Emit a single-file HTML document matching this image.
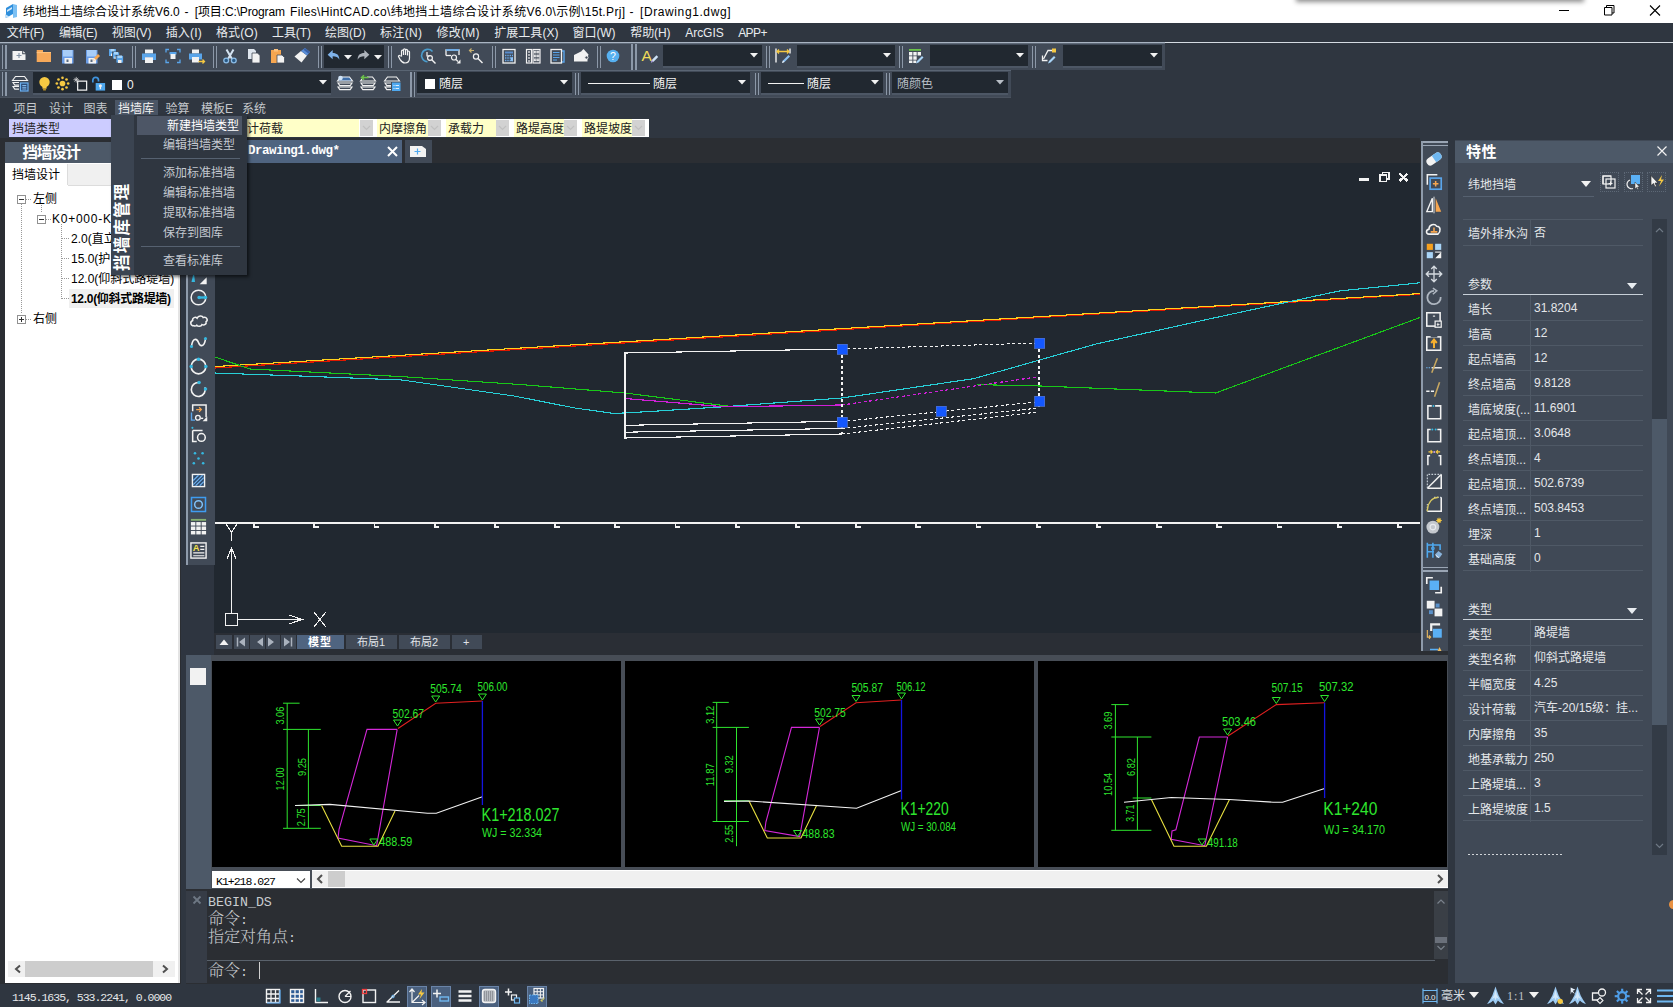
<!DOCTYPE html>
<html lang="zh-CN"><head><meta charset="utf-8"><title>纬地挡土墙综合设计系统V6.0</title>
<style>
html,body{margin:0;padding:0}
body{width:1673px;height:1007px;overflow:hidden;position:relative;background:#2b2e33;font-family:"Liberation Sans","Noto Sans CJK SC",sans-serif;font-size:12px;color:#e6e6e6}
.a{position:absolute;display:block}
.t{white-space:nowrap}
svg{overflow:visible}
</style></head>
<body>
<div class="a" style="left:0px;top:0px;width:1673px;height:23px;background:#ffffff;"></div>
<div class="a" style="left:1298px;top:-12px;width:284px;height:12px;background:#fff;box-shadow:0 0 5px 2px rgba(0,0,0,.45);"></div>
<svg class="a" style="left:4px;top:3px;" width="15" height="16" viewBox="0 0 15 16"><path d="M2 5l7-4v10l-7 4z" fill="#2f8fdc"/><path d="M9 1l4 1v12l-4 1z" fill="#7cc0f3"/><path d="M1 11l5 3-5 1z" fill="#bfe0fa"/><path d="M3 7l5-3v2l-5 3z" fill="#fff" opacity=".8"/></svg>
<div class="a t" style="left:23px;top:2.5px;height:18px;line-height:18px;font-size:12px;color:#000;letter-spacing:0.00px;">纬地挡土墙综合设计系统V6.0</div>
<div class="a t" style="left:184.5px;top:2.5px;height:18px;line-height:18px;font-size:12px;color:#000;">-</div>
<div class="a t" style="left:194.8px;top:2.5px;height:18px;line-height:18px;font-size:12px;color:#000;letter-spacing:-0.14px;">[项目:C:\Program</div>
<div class="a t" style="left:290px;top:2.5px;height:18px;line-height:18px;font-size:12px;color:#000;letter-spacing:0.35px;">Files\HintCAD.co\纬地挡土墙综合设计系统V6.0\示例\15t.Prj]</div>
<div class="a t" style="left:629.5px;top:2.5px;height:18px;line-height:18px;font-size:12px;color:#000;">-</div>
<div class="a t" style="left:640px;top:2.5px;height:18px;line-height:18px;font-size:12px;color:#000;letter-spacing:0.60px;">[Drawing1.dwg]</div>
<svg class="a" style="left:1550px;top:0px;" width="120" height="22" viewBox="0 0 120 22"><path d="M9 10.5h10" stroke="#000" stroke-width="1"/><path d="M54.5 7.5h7.5v7.5h-7.5zM56.5 7.5v-2h7.5v7.5h-2" stroke="#000" fill="none" stroke-width="1"/><path d="M100 5.5l10 10M110 5.5l-10 10" stroke="#000" stroke-width="1.1"/></svg>
<div class="a" style="left:0px;top:23px;width:1673px;height:115px;background:#2f3640;"></div>
<div class="a t" style="left:6.7px;top:23.5px;height:18px;line-height:18px;font-size:12px;color:#e9ecef;letter-spacing:-0.41px;">文件(F)</div>
<div class="a t" style="left:58.9px;top:23.5px;height:18px;line-height:18px;font-size:12px;color:#e9ecef;letter-spacing:-0.33px;">编辑(E)</div>
<div class="a t" style="left:111.8px;top:23.5px;height:18px;line-height:18px;font-size:12px;color:#e9ecef;letter-spacing:-0.07px;">视图(V)</div>
<div class="a t" style="left:165.7px;top:23.5px;height:18px;line-height:18px;font-size:12px;color:#e9ecef;letter-spacing:0.17px;">插入(I)</div>
<div class="a t" style="left:215.9px;top:23.5px;height:18px;line-height:18px;font-size:12px;color:#e9ecef;letter-spacing:0.12px;">格式(O)</div>
<div class="a t" style="left:272px;top:23.5px;height:18px;line-height:18px;font-size:12px;color:#e9ecef;letter-spacing:-0.08px;">工具(T)</div>
<div class="a t" style="left:324.9px;top:23.5px;height:18px;line-height:18px;font-size:12px;color:#e9ecef;letter-spacing:0.03px;">绘图(D)</div>
<div class="a t" style="left:380px;top:23.5px;height:18px;line-height:18px;font-size:12px;color:#e9ecef;letter-spacing:0.33px;">标注(N)</div>
<div class="a t" style="left:436.5px;top:23.5px;height:18px;line-height:18px;font-size:12px;color:#e9ecef;letter-spacing:0.25px;">修改(M)</div>
<div class="a t" style="left:494.2px;top:23.5px;height:18px;line-height:18px;font-size:12px;color:#e9ecef;letter-spacing:0.05px;">扩展工具(X)</div>
<div class="a t" style="left:572.6px;top:23.5px;height:18px;line-height:18px;font-size:12px;color:#e9ecef;letter-spacing:-0.08px;">窗口(W)</div>
<div class="a t" style="left:630.3px;top:23.5px;height:18px;line-height:18px;font-size:12px;color:#e9ecef;letter-spacing:-0.12px;">帮助(H)</div>
<div class="a t" style="left:685.2px;top:23.5px;height:18px;line-height:18px;font-size:12px;color:#e9ecef;letter-spacing:-0.03px;">ArcGIS</div>
<div class="a t" style="left:738.2px;top:23.5px;height:18px;line-height:18px;font-size:12px;color:#e9ecef;letter-spacing:-0.58px;">APP+</div>
<div class="a" style="left:0px;top:42px;width:1673px;height:1px;background:#a9b4c2;"></div>
<div class="a" style="left:0px;top:43px;width:1165px;height:1px;background:#5f6a78;"></div>
<div class="a" style="left:1165px;top:42px;width:508px;height:1px;background:#d5dbe2;"></div>
<div class="a" style="left:0px;top:44px;width:1165px;height:26px;background:#414a57;"></div>
<div class="a" style="left:0px;top:70px;width:1011px;height:1px;background:#5a6573;"></div>
<div class="a" style="left:1.5px;top:45px;width:1.5px;height:24px;background:#8c98a8;"></div><div class="a" style="left:5px;top:45px;width:2px;height:24px;background:#8c98a8;"></div>
<svg class="a" style="left:10px;top:47px;" width="18" height="18" viewBox="0 0 18 18"><path d="M2.500 4h9.700v3.300h3.300V13H2.500z" fill="#f2f2f2" /><path d="M13.200 4l2.300 2.300h-2.300z" fill="#f2f2f2" /><path d="M9 6v5M6.500 8.500h5" fill="none" stroke="#7f8fa2" stroke-width="1.1" /></svg>
<svg class="a" style="left:35px;top:47px;" width="18" height="18" viewBox="0 0 18 18"><path d="M1.700 3.100h6.300v2h8v9.800H1.700z" fill="#f6a95a" /><path d="M1.700 5.600h14.300" fill="none" stroke="#ffc480" stroke-width="1" /></svg>
<svg class="a" style="left:59px;top:47px;" width="18" height="18" viewBox="0 0 18 18"><rect x="3" y="3" width="11.5" height="13.5" fill="#6a9ce6" /><rect x="4" y="3" width="9.5" height="6.5" fill="#a8cdf8" /><rect x="5.5" y="11" width="7.5" height="5.5" fill="#f2f2f2" /><rect x="7.5" y="12.5" width="2" height="2.5" fill="#5a6a80" /></svg>
<svg class="a" style="left:83px;top:47px;" width="18" height="18" viewBox="0 0 18 18"><rect x="3" y="3" width="11.5" height="13.5" fill="#6a9ce6" /><rect x="4" y="3" width="9.5" height="6.5" fill="#a8cdf8" /><rect x="5.5" y="11" width="7.5" height="5.5" fill="#f2f2f2" /><rect x="7.5" y="12.5" width="2" height="2.5" fill="#5a6a80" /><path d="M10 14l1-3 4-4 2 2-4 4z" fill="#f6a650" /><path d="M10 14l1-3 2 2z" fill="#f2f2f2" /></svg>
<svg class="a" style="left:107px;top:47px;" width="18" height="18" viewBox="0 0 18 18"><rect x="2" y="2" width="7" height="7" fill="#5aa5ea" /><rect x="3.5" y="2" width="4" height="2.5" fill="#a9d4f7" /><rect x="4" y="6.5" width="3" height="2.5" fill="#f2f2f2" /><rect x="5.5" y="5" width="7" height="7" fill="#5aa5ea" stroke="#414a57" stroke-width="0.8" /><rect x="7" y="5" width="4" height="2.5" fill="#a9d4f7" /><rect x="7.5" y="9.5" width="3" height="2.5" fill="#f2f2f2" /><rect x="9" y="8.5" width="7.5" height="7.5" fill="#5aa5ea" stroke="#414a57" stroke-width="0.8" /><rect x="10.5" y="8.5" width="4.5" height="2.5" fill="#a9d4f7" /><rect x="11" y="13" width="3.5" height="3" fill="#f2f2f2" /></svg>
<svg class="a" style="left:140px;top:47px;" width="18" height="18" viewBox="0 0 18 18"><rect x="5" y="2.5" width="8" height="4" fill="#f2f2f2" /><path d="M2 6.5h14v6.5H2z" fill="#5aa5ea" /><rect x="5" y="10" width="8" height="6" fill="#f2f2f2" /><rect x="5" y="10" width="8" height="1" fill="#c8d4e4" /></svg>
<svg class="a" style="left:164px;top:47px;" width="18" height="18" viewBox="0 0 18 18"><path d="M2 5.5V2.5h3M13 2.5h3v3M16 12.5v3h-3M5 15.5H2v-3" fill="none" stroke="#5aa5ea" stroke-width="1.3" /><rect x="5.5" y="5" width="7" height="2.5" fill="#5aa5ea" /><rect x="6.5" y="7" width="5" height="5" fill="#f2f2f2" /></svg>
<svg class="a" style="left:188px;top:47px;" width="18" height="18" viewBox="0 0 18 18"><rect x="4" y="2.5" width="7" height="4" fill="#f2f2f2" /><path d="M1 6.5h13v6H1z" fill="#5aa5ea" /><rect x="4" y="10" width="7" height="5.5" fill="#f2f2f2" /><path d="M10.5 14.5h6M14.5 12.5l2 2-2 2" fill="none" stroke="#f5c842" stroke-width="1.3" /></svg>
<svg class="a" style="left:221px;top:47px;" width="18" height="18" viewBox="0 0 18 18"><path d="M5.500 2.500l5.500 9.500M12.500 2.500L7 12" fill="none" stroke="#d5e4f2" stroke-width="2" /><circle cx="5.2" cy="13.5" r="2.4" fill="#2a5a86" stroke="#8cbce6" stroke-width="1.3"/><circle cx="12.8" cy="13.5" r="2.4" fill="#2a5a86" stroke="#8cbce6" stroke-width="1.3"/></svg>
<svg class="a" style="left:245px;top:47px;" width="18" height="18" viewBox="0 0 18 18"><path d="M3 2h6l2 2v8H3z" fill="#dfe6ee" /><path d="M7 6h5.5L15 8.5V16H7z" fill="#f2f2f2" stroke="#414a57" stroke-width="0.8" /></svg>
<svg class="a" style="left:269px;top:47px;" width="18" height="18" viewBox="0 0 18 18"><path d="M2 3h10v13H2z" fill="#f6a650" /><rect x="5" y="2" width="4" height="2.5" fill="#fbc27f" /><path d="M8 8h5l2.5 2.5V16H8z" fill="#f2f2f2" stroke="#414a57" stroke-width="0.8" /></svg>
<svg class="a" style="left:293px;top:47px;" width="18" height="18" viewBox="0 0 18 18"><path d="M1.500 9.500L8 4l6 4.500L8.500 15.500z" fill="#f2f2f2" /><path d="M8 4l4-3 5 4-3 3.500z" fill="#5a8ed8" /><path d="M12 1l5 4-1.500 1.800-5-4z" fill="#3a62a8" /></svg>
<div class="a" style="left:132px;top:46px;width:1px;height:22px;background:#8c98a8;"></div><div class="a" style="left:135px;top:46px;width:1px;height:22px;background:#8c98a8;"></div>
<div class="a" style="left:213px;top:46px;width:1px;height:22px;background:#8c98a8;"></div><div class="a" style="left:216px;top:46px;width:1px;height:22px;background:#8c98a8;"></div>
<div class="a" style="left:318px;top:46px;width:1px;height:22px;background:#8c98a8;"></div><div class="a" style="left:321px;top:46px;width:1px;height:22px;background:#8c98a8;"></div>
<div class="a" style="left:388px;top:46px;width:1px;height:22px;background:#8c98a8;"></div><div class="a" style="left:391px;top:46px;width:1px;height:22px;background:#8c98a8;"></div>
<div class="a" style="left:492px;top:46px;width:1px;height:22px;background:#8c98a8;"></div><div class="a" style="left:495px;top:46px;width:1px;height:22px;background:#8c98a8;"></div>
<div class="a" style="left:597px;top:46px;width:1px;height:22px;background:#8c98a8;"></div><div class="a" style="left:600px;top:46px;width:1px;height:22px;background:#8c98a8;"></div>
<div class="a" style="left:324px;top:45px;width:60px;height:23px;background:#212830;"></div>
<svg class="a" style="left:326px;top:48px;" width="15" height="15" viewBox="0 0 18 18"><path d="M2 8l6-5.5v3.5c5 0 8 2.5 8 8-1.5-3-4-4-8-4v3.5z" fill="#7fb2ea" /></svg>
<svg class="a" style="left:356px;top:48px;" width="15" height="15" viewBox="0 0 18 18"><path d="M16 8l-6-5.5v3.5c-5 0-8 2.5-8 8 1.5-3 4-4 8-4v3.5z" fill="#aeb4bc" /></svg>
<svg class="a" style="left:344px;top:55px;" width="8" height="5" viewBox="0 0 8 5"><path d="M0 0h8l-4 4.500z" fill="#f2f2f2"/></svg>
<svg class="a" style="left:374px;top:55px;" width="8" height="5" viewBox="0 0 8 5"><path d="M0 0h8l-4 4.500z" fill="#f2f2f2"/></svg>
<svg class="a" style="left:396px;top:47px;" width="18" height="18" viewBox="0 0 18 18"><path d="M5.5 9V4.2a1 1 0 0 1 2 0V8V2.8a1 1 0 0 1 2 0V8V3.4a1 1 0 0 1 2 0V8.5V5a1 1 0 0 1 2 0V11c0 3-1.8 5-4.5 5s-3.6-1.3-5-3.6L2.6 9.8c-.6-1 .6-1.8 1.4-1z" fill="none" stroke="#f2f2f2" stroke-width="1.2" /></svg>
<svg class="a" style="left:419px;top:47px;" width="18" height="18" viewBox="0 0 18 18"><path d="M13.500 4.500A6.200 6.200 0 1 0 8.500 14.700" fill="none" stroke="#4a9ccc" stroke-width="1.6" /><path d="M8 5v4h2.5" fill="none" stroke="#f2f2f2" stroke-width="1.2" /><circle cx="11" cy="11" r="2.4" fill="none" stroke="#f2f2f2" stroke-width="1.2"/><path d="M12.8 12.8L16.5 16.5" fill="none" stroke="#f2f2f2" stroke-width="1.4" /></svg>
<svg class="a" style="left:444px;top:47px;" width="18" height="18" viewBox="0 0 18 18"><path d="M2 8.5V3h13v5" fill="none" stroke="#f2f2f2" stroke-width="1.3" /><rect x="2" y="2.2" width="13" height="1.5" fill="#5aa5ea" /><path d="M2 8.5h5" fill="none" stroke="#f2f2f2" stroke-width="1.3" /><circle cx="10" cy="10.5" r="2.5" fill="none" stroke="#f2f2f2" stroke-width="1.2"/><path d="M12 12.5L14 14.5" fill="none" stroke="#f2f2f2" stroke-width="1.3" /><path d="M16.5 12.5v4h-4z" fill="#f2f2f2" /></svg>
<svg class="a" style="left:467px;top:47px;" width="18" height="18" viewBox="0 0 18 18"><path d="M7 3.5H2.5M4.5 1.5l-2 2 2 2" fill="none" stroke="#c8b070" stroke-width="1.2" /><circle cx="9" cy="9.5" r="2.6" fill="none" stroke="#f2f2f2" stroke-width="1.2"/><path d="M11 11.5L15.5 16" fill="none" stroke="#f2f2f2" stroke-width="1.4" /></svg>
<svg class="a" style="left:500px;top:47px;" width="18" height="18" viewBox="0 0 18 18"><rect x="3" y="2.5" width="12" height="13.5" fill="none" stroke="#f2f2f2" stroke-width="1.3" /><rect x="5" y="4.5" width="8" height="2" fill="#5a8ccc" /><path d="M5 8.500h8M5 11h8M5 13.500h8" fill="none" stroke="#6aa8e8" stroke-width="1.3" stroke-dasharray="1.400 0.900"/><rect x="10.8" y="10.3" width="2.2" height="3.9" fill="#8cc0f2" /></svg>
<svg class="a" style="left:524px;top:47px;" width="18" height="18" viewBox="0 0 18 18"><rect x="2.5" y="2.5" width="5" height="13.5" fill="none" stroke="#f2f2f2" stroke-width="1.2" /><rect x="9" y="2.5" width="7" height="13.5" fill="none" stroke="#f2f2f2" stroke-width="1.2" /><path d="M4.200 5h1.600M4.200 8h1.600M4.200 11h1.600M4.200 14h1.600" fill="none" stroke="#f2f2f2" stroke-width="1.5" /><rect x="10.3" y="4.2" width="1.7" height="1.7" fill="none" stroke="#f2f2f2" stroke-width="0.9" /><rect x="10.3" y="8.1" width="1.7" height="1.7" fill="none" stroke="#f2f2f2" stroke-width="0.9" /><rect x="10.3" y="12.0" width="1.7" height="1.7" fill="none" stroke="#f2f2f2" stroke-width="0.9" /><rect x="13.200000000000001" y="4.2" width="1.7" height="1.7" fill="none" stroke="#f2f2f2" stroke-width="0.9" /><rect x="13.200000000000001" y="8.1" width="1.7" height="1.7" fill="none" stroke="#f2f2f2" stroke-width="0.9" /><rect x="13.200000000000001" y="12.0" width="1.7" height="1.7" fill="none" stroke="#f2f2f2" stroke-width="0.9" /></svg>
<svg class="a" style="left:548px;top:47px;" width="18" height="18" viewBox="0 0 18 18"><path d="M14 4h2v11h-3" fill="none" stroke="#5aa5ea" stroke-width="1.4" /><rect x="3" y="2.5" width="10.5" height="13.5" fill="none" stroke="#f2f2f2" stroke-width="1.3" /><path d="M5 5.5h6.5M5 8h6.5M5 10.5h6.5M5 13h4" fill="none" stroke="#5aa5ea" stroke-width="1.2" /></svg>
<svg class="a" style="left:572px;top:47px;" width="18" height="18" viewBox="0 0 18 18"><path d="M2 8l7-3.5 3 1.5 3.5 4.5v4H2z" fill="#f2f2f2" /><path d="M9 4.5l2.5-2.5 5 5.5-1 3" fill="#f2f2f2" /><circle cx="14.5" cy="10.5" r="1.6" fill="#414a57" stroke="#f2f2f2" stroke-width="0.9"/></svg>
<svg class="a" style="left:604px;top:47px;" width="18" height="18" viewBox="0 0 18 18"><circle cx="9" cy="9" r="6.3" fill="#56b0f0"/><text x="9" y="12.700" font-size="10.500" fill="#fff" text-anchor="middle" font-family="Liberation Sans,sans-serif">?</text></svg>
<div class="a" style="left:631px;top:44px;width:2px;height:26px;background:#8c98a8;"></div>
<div class="a" style="left:635px;top:44px;width:2px;height:26px;background:#8c98a8;"></div>
<svg class="a" style="left:640px;top:47px;" width="18" height="18" viewBox="0 0 18 18"><text x="1.500" y="14" font-size="15.500" fill="#f0dc5a" font-family="Liberation Sans,sans-serif">A</text><path d="M11 15.500l.8-2.500 4.700-4.700 1.700 1.700-4.700 4.700z" fill="#cfe3f7" /><path d="M11 15.500l.8-2.500 1.700 1.700z" fill="#9a86c8" /></svg>
<div class="a" style="left:663px;top:45px;width:99px;height:21px;background:#212830;"></div><div class="a" style="left:663px;top:66px;width:99px;height:2px;background:#4d5765;"></div><svg class="a" style="left:749.5px;top:53px;" width="8" height="5" viewBox="0 0 8 5"><path d="M0 0h8l-4 4.500z" fill="#f2f2f2"/></svg>
<div class="a" style="left:766px;top:46px;width:1px;height:22px;background:#8c98a8;"></div><div class="a" style="left:769px;top:46px;width:1px;height:22px;background:#8c98a8;"></div>
<svg class="a" style="left:774px;top:47px;" width="18" height="18" viewBox="0 0 18 18"><path d="M2 1.5v14M16 1.5v5" fill="none" stroke="#f2f2f2" stroke-width="1.4" /><path d="M3 4.5h12M5 2.5l-2 2 2 2M13 2.5l2 2-2 2" fill="none" stroke="#f5c842" stroke-width="1.3" /><path d="M8 16l1-2.5 5.5-5.5 1.5 1.5-5.5 5.5z" fill="#8cc0f2" /><path d="M8 16l1-2.5 1.5 1.5z" fill="#f2f2f2" /></svg>
<div class="a" style="left:797px;top:45px;width:98px;height:21px;background:#212830;"></div><div class="a" style="left:797px;top:66px;width:98px;height:2px;background:#4d5765;"></div><svg class="a" style="left:882.5px;top:53px;" width="8" height="5" viewBox="0 0 8 5"><path d="M0 0h8l-4 4.500z" fill="#f2f2f2"/></svg>
<div class="a" style="left:899px;top:46px;width:1px;height:22px;background:#8c98a8;"></div><div class="a" style="left:902px;top:46px;width:1px;height:22px;background:#8c98a8;"></div>
<svg class="a" style="left:907px;top:47px;" width="18" height="18" viewBox="0 0 18 18"><rect x="2" y="2" width="12" height="1.8" fill="#6cc24a" /><path d="M2 5h3.4v3.4H2zM6.3 5h3.4v3.4H6.3zM10.6 5h3.4v3.4h-3.4zM2 9.3h3.4v3.4H2zM6.3 9.3h3.4v3.4H6.3zM2 13.6h3.4V16H2zM6.3 13.6h3v2.4h-3z" fill="#f2f2f2" /><path d="M9 16.5l1-2.5 5-5 1.5 1.5-5 5z" fill="#a9d4f7" /></svg>
<div class="a" style="left:930px;top:45px;width:98px;height:21px;background:#212830;"></div><div class="a" style="left:930px;top:66px;width:98px;height:2px;background:#4d5765;"></div><svg class="a" style="left:1015.5px;top:53px;" width="8" height="5" viewBox="0 0 8 5"><path d="M0 0h8l-4 4.500z" fill="#f2f2f2"/></svg>
<div class="a" style="left:1032px;top:46px;width:1px;height:22px;background:#8c98a8;"></div><div class="a" style="left:1035px;top:46px;width:1px;height:22px;background:#8c98a8;"></div>
<svg class="a" style="left:1040px;top:47px;" width="18" height="18" viewBox="0 0 18 18"><rect x="12" y="1.5" width="4" height="4" fill="#f5c842" /><path d="M12 3.5H8L3.5 12" fill="none" stroke="#f2f2f2" stroke-width="1.3" /><path d="M2.5 8.5v5h5" fill="none" stroke="#f2f2f2" stroke-width="1.3" /><path d="M8 16.5l1-2.5 5-5 1.5 1.5-5 5z" fill="#a9d4f7" /></svg>
<div class="a" style="left:1063px;top:45px;width:99px;height:21px;background:#212830;"></div><div class="a" style="left:1063px;top:66px;width:99px;height:2px;background:#4d5765;"></div><svg class="a" style="left:1149.5px;top:53px;" width="8" height="5" viewBox="0 0 8 5"><path d="M0 0h8l-4 4.500z" fill="#f2f2f2"/></svg>
<div class="a" style="left:0px;top:71px;width:1011px;height:26px;background:#414a57;"></div>
<div class="a" style="left:0px;top:97px;width:1011px;height:1px;background:#4a525e;"></div>
<div class="a" style="left:1.5px;top:72px;width:1.5px;height:24px;background:#8c98a8;"></div><div class="a" style="left:5px;top:72px;width:2px;height:24px;background:#8c98a8;"></div>
<svg class="a" style="left:11px;top:74px;" width="18" height="18" viewBox="0 0 18 18"><path d="M4.5 2.5h9l3 4H1.5z" fill="none" stroke="#f2f2f2" stroke-width="1.1" /><path d="M8 8.500H2l1.800 2.600H8M8 12.500H2l1.800 2.600H8" fill="none" stroke="#f2f2f2" stroke-width="1.1" /><rect x="9.5" y="9" width="7.5" height="8" fill="#2f4e78" stroke="#6ab0f0" stroke-width="1.2" /><path d="M11.300 11.500h4M11.300 13.300h4M11.300 15h4" fill="none" stroke="#8cc4f6" stroke-width="0.9" /></svg>
<div class="a" style="left:33px;top:72px;width:298px;height:21px;background:#212830;"></div><div class="a" style="left:33px;top:93px;width:298px;height:2px;background:#4d5765;"></div><svg class="a" style="left:318.5px;top:80px;" width="8" height="5" viewBox="0 0 8 5"><path d="M0 0h8l-4 4.500z" fill="#f2f2f2"/></svg>
<svg class="a" style="left:36px;top:75px;" width="17" height="17" viewBox="0 0 18 18"><circle cx="9" cy="7.5" r="5.5" fill="#f5c842"/><rect x="6.8" y="12.5" width="4.4" height="2" fill="#f5c842" /><rect x="7.5" y="15" width="3" height="1.3" fill="#d9a520" /></svg>
<svg class="a" style="left:54px;top:75px;" width="17" height="17" viewBox="0 0 18 18"><circle cx="9" cy="9" r="3" fill="#f5c842"/><circle cx="15.0" cy="9.0" r="1.4" fill="#f5c842"/><circle cx="13.24" cy="13.24" r="1.4" fill="#f5c842"/><circle cx="9.0" cy="15.0" r="1.4" fill="#f5c842"/><circle cx="4.76" cy="13.24" r="1.4" fill="#f5c842"/><circle cx="3.0" cy="9.0" r="1.4" fill="#f5c842"/><circle cx="4.76" cy="4.76" r="1.4" fill="#f5c842"/><circle cx="9.0" cy="3.0" r="1.4" fill="#f5c842"/><circle cx="13.24" cy="4.76" r="1.4" fill="#f5c842"/></svg>
<svg class="a" style="left:72px;top:75px;" width="17" height="17" viewBox="0 0 18 18"><rect x="6" y="6.5" width="9.5" height="9.5" fill="none" stroke="#f2f2f2" stroke-width="1.3" /><path d="M4.500 2v6M1.500 5h6M2.500 3l4 4M6.500 3l-4 4" fill="none" stroke="#d8d8d8" stroke-width="0.8" /></svg>
<svg class="a" style="left:90px;top:75px;" width="17" height="17" viewBox="0 0 18 18"><path d="M3 8V5.5a3 3 0 0 1 6 0V7" fill="none" stroke="#3f93dd" stroke-width="1.8" /><rect x="6" y="8.5" width="10" height="8" fill="#4fa8ee" /><circle cx="11" cy="11.5" r="1.6" fill="#f2f2f2"/><rect x="10.3" y="12" width="1.4" height="3" fill="#f2f2f2" /></svg>
<div class="a" style="left:112px;top:80px;width:10px;height:10px;background:#ffffff;"></div>
<div class="a t" style="left:127px;top:76.5px;height:16px;line-height:16px;font-size:12px;color:#f2f2f2;">0</div>
<svg class="a" style="left:336px;top:74px;" width="18" height="18" viewBox="0 0 18 18"><path d="M4.5 3h9l3 4H1.5z" fill="#3f6ea8" stroke="#f2f2f2" stroke-width="1.1" /><circle cx="4.5" cy="4" r="2.3" fill="#cfe3f7"/><path d="M2 9h14l-1.8 2.6H3.8z" fill="none" stroke="#f2f2f2" stroke-width="1.1" /><path d="M2 13h14l-1.8 2.6H3.8z" fill="none" stroke="#f2f2f2" stroke-width="1.1" /></svg>
<svg class="a" style="left:359px;top:74px;" width="18" height="18" viewBox="0 0 18 18"><path d="M8 3h5.5l3 4H1.5l1.5-2" fill="none" stroke="#f2f2f2" stroke-width="1.1" /><path d="M9.5 3.5H2.5M5 1.2L2.5 3.5 5 5.8" fill="none" stroke="#6cc24a" stroke-width="1.5" /><path d="M2 9h14l-1.8 2.6H3.8z" fill="none" stroke="#f2f2f2" stroke-width="1.1" /><path d="M2 13h14l-1.8 2.6H3.8z" fill="none" stroke="#f2f2f2" stroke-width="1.1" /></svg>
<svg class="a" style="left:383px;top:74px;" width="18" height="18" viewBox="0 0 18 18"><path d="M4.5 3h9l3 4H1.5z" fill="none" stroke="#f2f2f2" stroke-width="1.1" /><path d="M8 9H2l1.800 2.600H8M8 13H2l1.800 2.600H8" fill="none" stroke="#f2f2f2" stroke-width="1.1" /><rect x="9" y="8.5" width="8.5" height="8.5" fill="#4fa8ee" /><path d="M10.500 11.500h1M12.500 11.500h3.500M10.500 14.500h1M12.500 14.500h3.500" fill="none" stroke="#dceefc" stroke-width="1.2" /></svg>
<div class="a" style="left:410px;top:72px;width:2px;height:25px;background:#8c98a8;"></div>
<div class="a" style="left:414px;top:72px;width:1px;height:25px;background:#8c98a8;"></div>
<div class="a" style="left:417px;top:72px;width:155px;height:21px;background:#212830;"></div><div class="a" style="left:417px;top:93px;width:155px;height:2px;background:#4d5765;"></div><svg class="a" style="left:559.5px;top:80px;" width="8" height="5" viewBox="0 0 8 5"><path d="M0 0h8l-4 4.500z" fill="#f2f2f2"/></svg>
<div class="a" style="left:425px;top:79px;width:10px;height:10px;background:#fff;"></div>
<div class="a t" style="left:439px;top:75.5px;height:16px;line-height:16px;font-size:12px;color:#f2f2f2;">随层</div>
<div class="a" style="left:575px;top:73px;width:1px;height:22px;background:#8c98a8;"></div><div class="a" style="left:578px;top:73px;width:1px;height:22px;background:#8c98a8;"></div>
<div class="a" style="left:581px;top:72px;width:169px;height:21px;background:#212830;"></div><div class="a" style="left:581px;top:93px;width:169px;height:2px;background:#4d5765;"></div><svg class="a" style="left:737.5px;top:80px;" width="8" height="5" viewBox="0 0 8 5"><path d="M0 0h8l-4 4.500z" fill="#f2f2f2"/></svg>
<div class="a" style="left:588px;top:83px;width:62px;height:1px;background:#f2f2f2;"></div>
<div class="a t" style="left:653px;top:75.5px;height:16px;line-height:16px;font-size:12px;color:#f2f2f2;">随层</div>
<div class="a" style="left:755px;top:73px;width:1px;height:22px;background:#8c98a8;"></div><div class="a" style="left:758px;top:73px;width:1px;height:22px;background:#8c98a8;"></div>
<div class="a" style="left:761px;top:72px;width:122px;height:21px;background:#212830;"></div><div class="a" style="left:761px;top:93px;width:122px;height:2px;background:#4d5765;"></div><svg class="a" style="left:870.5px;top:80px;" width="8" height="5" viewBox="0 0 8 5"><path d="M0 0h8l-4 4.500z" fill="#f2f2f2"/></svg>
<div class="a" style="left:768px;top:83px;width:36px;height:1px;background:#f2f2f2;"></div>
<div class="a t" style="left:807px;top:75.5px;height:16px;line-height:16px;font-size:12px;color:#f2f2f2;">随层</div>
<div class="a" style="left:886px;top:73px;width:1px;height:22px;background:#8c98a8;"></div><div class="a" style="left:889px;top:73px;width:1px;height:22px;background:#8c98a8;"></div>
<div class="a" style="left:892px;top:72px;width:116px;height:21px;background:#212830;"></div><div class="a" style="left:892px;top:93px;width:116px;height:2px;background:#4d5765;"></div><svg class="a" style="left:995.5px;top:80px;" width="8" height="5" viewBox="0 0 8 5"><path d="M0 0h8l-4 4.500z" fill="#b8bec6"/></svg>
<div class="a t" style="left:897px;top:75.5px;height:16px;line-height:16px;font-size:12px;color:#b8bec6;">随颜色</div>
<div class="a" style="left:115px;top:100px;width:43px;height:16px;background:#4a5565;"></div>
<div class="a t" style="left:13.5px;top:100.5px;height:16px;line-height:16px;font-size:12px;color:#c4c8cc;white-space:nowrap;">项目</div>
<div class="a t" style="left:49px;top:100.5px;height:16px;line-height:16px;font-size:12px;color:#c4c8cc;white-space:nowrap;">设计</div>
<div class="a t" style="left:83.5px;top:100.5px;height:16px;line-height:16px;font-size:12px;color:#c4c8cc;white-space:nowrap;">图表</div>
<div class="a t" style="left:118px;top:100.5px;height:16px;line-height:16px;font-size:12px;color:#f2f2f2;white-space:nowrap;">挡墙库</div>
<div class="a t" style="left:165.5px;top:100.5px;height:16px;line-height:16px;font-size:12px;color:#c4c8cc;white-space:nowrap;">验算</div>
<div class="a t" style="left:201px;top:100.5px;height:16px;line-height:16px;font-size:12px;color:#c4c8cc;white-space:nowrap;">模板E</div>
<div class="a t" style="left:242px;top:100.5px;height:16px;line-height:16px;font-size:12px;color:#c4c8cc;white-space:nowrap;">系统</div>
<div class="a" style="left:9px;top:119px;width:102px;height:18px;background:#ccccff;"></div>
<div class="a t" style="left:12px;top:120.5px;height:16px;line-height:16px;font-size:12px;color:#222;">挡墙类型</div>
<div class="a" style="left:245px;top:119px;width:404px;height:18px;background:#ffffff;"></div>
<div class="a" style="left:245px;top:119px;width:114px;height:18px;background:#ffffc8;"></div><div class="a t" style="left:247px;top:120.5px;height:16px;line-height:16px;font-size:12px;color:#222;white-space:nowrap;">计荷载</div><div class="a" style="left:360px;top:120px;width:13px;height:16px;background:#d2d2d2;"></div><svg class="a" style="left:362px;top:125px;" width="9" height="6" viewBox="0 0 9 6"><path d="M1 1l3.5 3.5L8 1" stroke="#c0c0c0" fill="none" stroke-width="1.2"/></svg>
<div class="a" style="left:377px;top:119px;width:51px;height:18px;background:#ffffc8;"></div><div class="a t" style="left:379px;top:120.5px;height:16px;line-height:16px;font-size:12px;color:#222;white-space:nowrap;">内摩擦角</div><div class="a" style="left:428px;top:120px;width:13px;height:16px;background:#d2d2d2;"></div><svg class="a" style="left:430px;top:125px;" width="9" height="6" viewBox="0 0 9 6"><path d="M1 1l3.5 3.5L8 1" stroke="#c0c0c0" fill="none" stroke-width="1.2"/></svg>
<div class="a" style="left:446px;top:119px;width:50px;height:18px;background:#ffffc8;"></div><div class="a t" style="left:448px;top:120.5px;height:16px;line-height:16px;font-size:12px;color:#222;white-space:nowrap;">承载力</div><div class="a" style="left:496px;top:120px;width:13px;height:16px;background:#d2d2d2;"></div><svg class="a" style="left:498px;top:125px;" width="9" height="6" viewBox="0 0 9 6"><path d="M1 1l3.5 3.5L8 1" stroke="#c0c0c0" fill="none" stroke-width="1.2"/></svg>
<div class="a" style="left:514px;top:119px;width:50px;height:18px;background:#ffffc8;"></div><div class="a t" style="left:516px;top:120.5px;height:16px;line-height:16px;font-size:12px;color:#222;white-space:nowrap;">路堤高度</div><div class="a" style="left:564px;top:120px;width:13px;height:16px;background:#d2d2d2;"></div><svg class="a" style="left:566px;top:125px;" width="9" height="6" viewBox="0 0 9 6"><path d="M1 1l3.5 3.5L8 1" stroke="#c0c0c0" fill="none" stroke-width="1.2"/></svg>
<div class="a" style="left:582px;top:119px;width:50px;height:18px;background:#ffffc8;"></div><div class="a t" style="left:584px;top:120.5px;height:16px;line-height:16px;font-size:12px;color:#222;white-space:nowrap;">路堤坡度</div><div class="a" style="left:632px;top:120px;width:13px;height:16px;background:#d2d2d2;"></div><svg class="a" style="left:634px;top:125px;" width="9" height="6" viewBox="0 0 9 6"><path d="M1 1l3.5 3.5L8 1" stroke="#c0c0c0" fill="none" stroke-width="1.2"/></svg>
<div class="a" style="left:5px;top:142px;width:175px;height:21px;background:#4d5968;"></div>
<div class="a t" style="left:22.5px;top:141.5px;height:22px;line-height:22px;font-size:15.5px;color:#ffffff;font-weight:bold;letter-spacing:-1.17px;">挡墙设计</div>
<div class="a" style="left:5px;top:163px;width:175px;height:23px;background:#f0f0f0;"></div>
<div class="a" style="left:5px;top:163px;width:63px;height:23px;background:#ffffff;"></div>
<div class="a" style="left:68px;top:163px;width:112px;height:1px;background:#ffffff;"></div>
<div class="a" style="left:68px;top:185px;width:112px;height:1px;background:#dcdcdc;"></div>
<div class="a" style="left:67px;top:164px;width:1px;height:21px;background:#dcdcdc;"></div>
<div class="a t" style="left:12px;top:167.0px;height:16px;line-height:16px;font-size:12px;color:#000;">挡墙设计</div>
<div class="a" style="left:5px;top:186px;width:173px;height:797px;background:#ffffff;"></div>
<div class="a" style="left:178px;top:163px;width:2px;height:820px;background:#e4e4e4;"></div>
<div class="a" style="left:21px;top:204px;width:1px;height:110px;background-image:linear-gradient(#999 50%,transparent 50%);background-size:1px 2px;"></div>
<div class="a" style="left:41px;top:205px;width:1px;height:8px;background-image:linear-gradient(#999 50%,transparent 50%);background-size:1px 2px;"></div>
<div class="a" style="left:61px;top:224px;width:1px;height:75px;background-image:linear-gradient(#999 50%,transparent 50%);background-size:1px 2px;"></div>
<div class="a" style="left:62px;top:238px;width:8px;height:1px;background-image:linear-gradient(90deg,#999 50%,transparent 50%);background-size:2px 1px;"></div>
<div class="a" style="left:62px;top:258px;width:8px;height:1px;background-image:linear-gradient(90deg,#999 50%,transparent 50%);background-size:2px 1px;"></div>
<div class="a" style="left:62px;top:278px;width:8px;height:1px;background-image:linear-gradient(90deg,#999 50%,transparent 50%);background-size:2px 1px;"></div>
<div class="a" style="left:62px;top:298px;width:8px;height:1px;background-image:linear-gradient(90deg,#999 50%,transparent 50%);background-size:2px 1px;"></div>
<div class="a" style="left:26px;top:199px;width:5px;height:1px;background-image:linear-gradient(90deg,#999 50%,transparent 50%);background-size:2px 1px;"></div>
<div class="a" style="left:46px;top:219px;width:5px;height:1px;background-image:linear-gradient(90deg,#999 50%,transparent 50%);background-size:2px 1px;"></div>
<div class="a" style="left:26px;top:319px;width:5px;height:1px;background-image:linear-gradient(90deg,#999 50%,transparent 50%);background-size:2px 1px;"></div>
<div class="a" style="left:17px;top:195px;width:9px;height:9px;background:#fff;box-sizing:border-box;border:1px solid #919191;"></div><div class="a" style="left:19px;top:199px;width:5px;height:1px;background:#333;"></div>
<div class="a" style="left:37px;top:215px;width:9px;height:9px;background:#fff;box-sizing:border-box;border:1px solid #919191;"></div><div class="a" style="left:39px;top:219px;width:5px;height:1px;background:#333;"></div>
<div class="a" style="left:17px;top:315px;width:9px;height:9px;background:#fff;box-sizing:border-box;border:1px solid #919191;"></div><div class="a" style="left:19px;top:319px;width:5px;height:1px;background:#333;"></div><div class="a" style="left:21px;top:317px;width:1px;height:5px;background:#333;"></div>
<div class="a t" style="left:33px;top:191.0px;height:16px;line-height:16px;font-size:12px;color:#000;">左侧</div>
<div class="a t" style="left:52px;top:211.0px;height:16px;line-height:16px;font-size:12px;color:#000;white-space:nowrap;letter-spacing:0.75px;">K0+000-K</div>
<div class="a t" style="left:71px;top:230.5px;height:16px;line-height:16px;font-size:12px;color:#000;white-space:nowrap;">2.0(直立</div>
<div class="a t" style="left:71px;top:250.5px;height:16px;line-height:16px;font-size:12px;color:#000;white-space:nowrap;">15.0(护</div>
<div class="a t" style="left:71px;top:270.5px;height:16px;line-height:16px;font-size:12px;color:#000;white-space:nowrap;width:103px;overflow:hidden;">12.0(仰斜式路堤墙)</div>
<div class="a" style="left:69px;top:289px;width:105px;height:19px;background:#f0f0f0;"></div>
<div class="a t" style="left:71px;top:290.5px;height:16px;line-height:16px;font-size:12px;color:#000;white-space:nowrap;font-weight:bold;width:103px;overflow:hidden;letter-spacing:-.3px;">12.0(仰斜式路堤墙)</div>
<div class="a t" style="left:33px;top:311.0px;height:16px;line-height:16px;font-size:12px;color:#000;">右侧</div>
<div class="a" style="left:8px;top:961px;width:167px;height:16px;background:#f0f0f0;"></div>
<div class="a" style="left:25px;top:961px;width:128px;height:16px;background:#cdcdcd;"></div>
<svg class="a" style="left:8px;top:961px;" width="168" height="16" viewBox="0 0 168 16"><path d="M12 4.5l-4 3.5 4 3.5M155 4.5l4 3.5-4 3.5" stroke="#505050" fill="none" stroke-width="2"/></svg>
<div class="a" style="left:181px;top:140px;width:5px;height:845px;background:#2f3640;"></div>
<div class="a" style="left:181px;top:140px;width:34px;height:515px;background:#2e3540;"></div>
<div class="a" style="left:214px;top:140px;width:188px;height:23px;background:#4f6480;"></div>
<div class="a t" style="left:248px;top:143.0px;height:16px;line-height:16px;font-size:12.5px;color:#fff;font-family:'Liberation Mono',monospace;font-weight:bold;letter-spacing:-0.46px;">Drawing1.dwg*</div>
<svg class="a" style="left:386px;top:145px;" width="13" height="13" viewBox="0 0 13 13"><path d="M2 2l9 9M11 2l-9 9" stroke="#fff" stroke-width="2"/></svg>
<div class="a" style="left:405px;top:140px;width:27px;height:23px;background:#414a57;"></div>
<svg class="a" style="left:409px;top:145px;" width="18" height="13" viewBox="0 0 18 13"><path d="M1 1h12l4 3v8H1z" fill="#f2f2f2"/><path d="M8.5 3.5v6M5.5 6.5h6" stroke="#4fa8ee" stroke-width="1.2"/></svg>
<div class="a" style="left:214px;top:163px;width:1206px;height:470px;background:#212830;"></div>
<svg class="a" style="left:0;top:0" width="1673" height="1007" viewBox="0 0 1673 1007"><defs><clipPath id="dc"><rect x="214" y="163" width="1206" height="470"/></clipPath></defs><g clip-path="url(#dc)" shape-rendering="crispEdges"><polyline points="214,368 1420,294.3" fill="none" stroke="#e01800" stroke-width="1.2" /><polyline points="214,366.6 1420,293.6" fill="none" stroke="#ffd21e" stroke-width="1.1" /><polyline points="215,357 250,369 400,376.5 520,384.5 625,393 735,407" fill="none" stroke="#18c818" stroke-width="1.1" /><polyline points="977,384.6 1040,386 1215.6,393 1420,317.5" fill="none" stroke="#18c818" stroke-width="1.1" /><polyline points="214,373 300,376 402,380 514,396 575,408 614,413.5 650,411.5 720,407 842,398 974,378.6 1096,344 1216,317.5 1339,291 1420,282.8" fill="none" stroke="#28d0d8" stroke-width="1.1" /><polyline points="625,398.5 724,406.8 842,405" fill="none" stroke="#d020d8" stroke-width="1.2" /><polyline points="842,405 1037,377" fill="none" stroke="#d020d8" stroke-width="1.2" stroke-dasharray="3 2.5"/><polyline points="842,349 625,353 625,438 842,434" fill="none" stroke="#f2f2f2" stroke-width="1.1" /><polyline points="625,425.3 842,421.3" fill="none" stroke="#f2f2f2" stroke-width="1.1" /><polyline points="625,432.2 842,428.4" fill="none" stroke="#f2f2f2" stroke-width="1.1" /><polyline points="842,349 1039,343 1039,408" fill="none" stroke="#f2f2f2" stroke-width="1.1" stroke-dasharray="3 2.5"/><polyline points="842,349 842,434" fill="none" stroke="#f2f2f2" stroke-width="1.1" stroke-dasharray="3 2.5"/><polyline points="842,421.5 1039,401.7" fill="none" stroke="#f2f2f2" stroke-width="1.1" stroke-dasharray="3 2.5"/><polyline points="842,428.5 1039,408" fill="none" stroke="#f2f2f2" stroke-width="1.1" stroke-dasharray="3 2.5"/><polyline points="842,434 1039,412" fill="none" stroke="#f2f2f2" stroke-width="1.1" stroke-dasharray="3 2.5"/><rect x="837" y="344" width="10" height="10" fill="#1458ff" stroke="#4a6fd0" stroke-width="0.8"/><rect x="1034.5" y="338" width="10" height="10" fill="#1458ff" stroke="#4a6fd0" stroke-width="0.8"/><rect x="837" y="417" width="10" height="10" fill="#1458ff" stroke="#4a6fd0" stroke-width="0.8"/><rect x="936" y="406" width="10" height="10" fill="#1458ff" stroke="#4a6fd0" stroke-width="0.8"/><rect x="1034.5" y="396" width="10" height="10" fill="#1458ff" stroke="#4a6fd0" stroke-width="0.8"/><polyline points="214,523 1420,523" fill="none" stroke="#f2f2f2" stroke-width="1.2" /><path d="M254.0 523v4h4.500" stroke="#f2f2f2" fill="none" stroke-width="1.800"/><path d="M314.2 523v4h4.500" stroke="#f2f2f2" fill="none" stroke-width="1.800"/><path d="M374.4 523v4h4.500" stroke="#f2f2f2" fill="none" stroke-width="1.800"/><path d="M434.6 523v4h4.500" stroke="#f2f2f2" fill="none" stroke-width="1.800"/><path d="M494.8 523v4h4.500" stroke="#f2f2f2" fill="none" stroke-width="1.800"/><path d="M555.0 523v4h4.500" stroke="#f2f2f2" fill="none" stroke-width="1.800"/><path d="M615.2 523v4h4.500" stroke="#f2f2f2" fill="none" stroke-width="1.800"/><path d="M675.4 523v4h4.500" stroke="#f2f2f2" fill="none" stroke-width="1.800"/><path d="M735.6 523v4h4.500" stroke="#f2f2f2" fill="none" stroke-width="1.800"/><path d="M795.8 523v4h4.500" stroke="#f2f2f2" fill="none" stroke-width="1.800"/><path d="M856.0 523v4h4.500" stroke="#f2f2f2" fill="none" stroke-width="1.800"/><path d="M916.2 523v4h4.500" stroke="#f2f2f2" fill="none" stroke-width="1.800"/><path d="M976.4 523v4h4.500" stroke="#f2f2f2" fill="none" stroke-width="1.800"/><path d="M1036.6 523v4h4.500" stroke="#f2f2f2" fill="none" stroke-width="1.800"/><path d="M1096.8 523v4h4.500" stroke="#f2f2f2" fill="none" stroke-width="1.800"/><path d="M1157.0 523v4h4.500" stroke="#f2f2f2" fill="none" stroke-width="1.800"/><path d="M1217.2 523v4h4.500" stroke="#f2f2f2" fill="none" stroke-width="1.800"/><path d="M1277.4 523v4h4.500" stroke="#f2f2f2" fill="none" stroke-width="1.800"/><path d="M1337.6 523v4h4.500" stroke="#f2f2f2" fill="none" stroke-width="1.800"/><path d="M1397.8 523v4h4.500" stroke="#f2f2f2" fill="none" stroke-width="1.800"/><path d="M226 524l5.5 8 5.5-8M231.5 532v9" stroke="#f2f2f2" fill="none" stroke-width="1.1"/><path d="M231.5 613V549M227 559l4.5-11 4.5 11" stroke="#f2f2f2" fill="none" stroke-width="1.1"/><rect x="225.5" y="613.5" width="12" height="12" stroke="#f2f2f2" fill="none" stroke-width="1.1"/><path d="M238 619.5H302M289 615l13 4.5-13 4.5" stroke="#f2f2f2" fill="none" stroke-width="1.1"/><path d="M314 612l12 15M326 612l-12 15" stroke="#f2f2f2" fill="none" stroke-width="1.1"/><path d="M1359 179.500h10" stroke="#f2f2f2" stroke-width="2.500"/><path d="M1380 175h6.500v6.500h-6.500zM1382.500 174.500v-2h6.500v6.500h-2" stroke="#f2f2f2" fill="none" stroke-width="1.8"/><path d="M1399.500 173.500l8 7.500M1407.500 173.500l-8 7.500" stroke="#f2f2f2" stroke-width="2.300"/></g></svg>
<div class="a" style="left:214px;top:633px;width:1206px;height:22px;background:#2a2e35;"></div>
<div class="a" style="left:216px;top:635px;width:16px;height:14px;background:#414a57;"></div>
<div class="a" style="left:234px;top:635px;width:15px;height:14px;background:#414a57;"></div>
<div class="a" style="left:250px;top:635px;width:15px;height:14px;background:#414a57;"></div>
<div class="a" style="left:266px;top:635px;width:14px;height:14px;background:#414a57;"></div>
<div class="a" style="left:281px;top:635px;width:15px;height:14px;background:#414a57;"></div>
<svg class="a" style="left:216px;top:634px;" width="80" height="16" viewBox="0 0 80 16"><path d="M3.5 11l4.5-5.5 4.5 5.5z" fill="#f2f2f2"/><path d="M21.5 3.5v9" stroke="#aab2bd" stroke-width="1.5"/><path d="M29 3.5v9l-6-4.5zM47 3.5v9l-6-4.5zM52 3.5v9l6-4.5zM68 3.5v9l6-4.5z" fill="#aab2bd"/><path d="M75.5 3.5v9" stroke="#aab2bd" stroke-width="1.5"/></svg>
<div class="a" style="left:297px;top:635px;width:47px;height:14px;background:#4f6480;"></div>
<div class="a t" style="left:308px;top:635.0px;height:14px;line-height:14px;font-size:11px;color:#fff;font-weight:bold;letter-spacing:1px;">模型</div>
<div class="a" style="left:346px;top:635px;width:51px;height:14px;background:#414a57;"></div>
<div class="a t" style="left:357px;top:635.0px;height:14px;line-height:14px;font-size:11px;color:#e0e4e8;white-space:nowrap;">布局1</div>
<div class="a" style="left:399px;top:635px;width:51px;height:14px;background:#414a57;"></div>
<div class="a t" style="left:410px;top:635.0px;height:14px;line-height:14px;font-size:11px;color:#e0e4e8;white-space:nowrap;">布局2</div>
<div class="a" style="left:452px;top:635px;width:30px;height:14px;background:#414a57;"></div>
<div class="a t" style="left:463px;top:634.5px;height:14px;line-height:14px;font-size:11px;color:#e0e4e8;">+</div>
<div class="a" style="left:186px;top:163px;width:29px;height:402px;background:#414a57;"></div>
<div class="a" style="left:186px;top:163px;width:2px;height:402px;background:#8f9bab;"></div>
<svg class="a" style="left:188px;top:268px;" width="21" height="21" viewBox="0 0 18 18"><path d="M5 3l-2 9h3z" fill="#35b8e0" /><path d="M16 8v6h-6z" fill="#f2f2f2" /></svg>
<svg class="a" style="left:188px;top:287px;" width="21" height="21" viewBox="0 0 18 18"><circle cx="9" cy="9" r="6.3" fill="none" stroke="#f2f2f2" stroke-width="1.3"/><path d="M9 9h6" fill="none" stroke="#35b8e0" stroke-width="2" /><circle cx="9.5" cy="9" r="1.5" fill="#35b8e0"/><circle cx="15" cy="9" r="1.5" fill="#35b8e0"/></svg>
<svg class="a" style="left:188px;top:310px;" width="21" height="21" viewBox="0 0 18 18"><path d="M5 13.5c-3 0-3.5-3.5-1-4.5-.5-2.5 2.5-3.5 3.8-2 1-2.5 4.5-2.5 5.2-.5 3-1 4.500 2 2.500 3.500.5 2-1.500 3.500-3.500 2.500-.8 1.800-3.500 2-4.500.5-.7.700-1.700.700-2.500.500z" fill="none" stroke="#f2f2f2" stroke-width="1.3" /></svg>
<svg class="a" style="left:188px;top:332px;" width="21" height="21" viewBox="0 0 18 18"><path d="M3 12c1-7 4.500-7 6-3s5 4 6-3" fill="none" stroke="#f2f2f2" stroke-width="1.4" /><circle cx="3" cy="12.5" r="1.3" fill="#35b8e0"/><circle cx="15" cy="5.5" r="1.3" fill="#35b8e0"/></svg>
<svg class="a" style="left:188px;top:356px;" width="21" height="21" viewBox="0 0 18 18"><circle cx="9" cy="9" r="6.3" fill="none" stroke="#f2f2f2" stroke-width="1.4"/><circle cx="9" cy="2.7" r="1.5" fill="#35b8e0"/><circle cx="2.7" cy="9" r="1.5" fill="#35b8e0"/><circle cx="15.3" cy="9" r="1.5" fill="#35b8e0"/></svg>
<svg class="a" style="left:188px;top:379px;" width="21" height="21" viewBox="0 0 18 18"><path d="M14.5 7a6 6 0 1 1-5-4" fill="none" stroke="#f2f2f2" stroke-width="1.4" /><circle cx="9.5" cy="3" r="1.5" fill="#35b8e0"/><circle cx="15" cy="8.5" r="1.5" fill="#35b8e0"/></svg>
<svg class="a" style="left:188px;top:402px;" width="21" height="21" viewBox="0 0 18 18"><path d="M4 8V2.5h11.500V13" fill="none" stroke="#f2f2f2" stroke-width="1.3" /><path d="M3 9v6.500h3" fill="none" stroke="#5aa5ea" stroke-width="1.2" /><circle cx="8.5" cy="13.5" r="2" fill="none" stroke="#f2f2f2" stroke-width="1.2"/><path d="M11 14h2" fill="none" stroke="#f2f2f2" stroke-width="1.2" /><path d="M7 6.500h4.500M9.500 4.500l2 2-2 2" fill="none" stroke="#f6a650" stroke-width="1" /><path d="M16.500 12.500v4h-4z" fill="#f2f2f2" /></svg>
<svg class="a" style="left:188px;top:424px;" width="21" height="21" viewBox="0 0 18 18"><path d="M4 5.500v9.500h3.500M4 5.500h8.500" fill="none" stroke="#f2f2f2" stroke-width="1.3" /><circle cx="3.8" cy="3.3" r="0.9" fill="#35b8e0"/><circle cx="11.5" cy="11.5" r="3.3" fill="#414a57" stroke="#f2f2f2" stroke-width="1.3"/></svg>
<svg class="a" style="left:188px;top:448px;" width="21" height="21" viewBox="0 0 18 18"><circle cx="6" cy="4.5" r="1.1" fill="#35b8e0"/><circle cx="12.5" cy="4.5" r="1.1" fill="#35b8e0"/><circle cx="9" cy="9" r="1.1" fill="#35b8e0"/><circle cx="5" cy="13" r="1.1" fill="#35b8e0"/><circle cx="13" cy="13" r="1.1" fill="#35b8e0"/></svg>
<svg class="a" style="left:188px;top:470px;" width="21" height="21" viewBox="0 0 18 18"><rect x="3.8" y="3.8" width="10.4" height="10.4" fill="#2c4a6c" stroke="#f2f2f2" stroke-width="1.2" /><path d="M4.500 9l4.500-4.500M4.500 12.500l8-8M6.500 13.500l7-7M10 13.500l3.500-3.500" fill="none" stroke="#6fb0ee" stroke-width="1" /></svg>
<svg class="a" style="left:188px;top:494px;" width="21" height="21" viewBox="0 0 18 18"><rect x="3" y="3" width="12" height="12" fill="none" stroke="#3f9cf0" stroke-width="1.3" /><circle cx="9" cy="9" r="3.3" fill="none" stroke="#7fc0f8" stroke-width="1.3"/></svg>
<svg class="a" style="left:188px;top:516px;" width="21" height="21" viewBox="0 0 18 18"><rect x="2.5" y="2.5" width="13" height="1.6" fill="#86b070" /><rect x="2.5" y="5.2" width="3.8" height="3" fill="#f2f2f2" /><rect x="2.5" y="9.0" width="3.8" height="3" fill="#f2f2f2" /><rect x="2.5" y="12.8" width="3.8" height="3" fill="#f2f2f2" /><rect x="7.1" y="5.2" width="3.8" height="3" fill="#f2f2f2" /><rect x="7.1" y="9.0" width="3.8" height="3" fill="#f2f2f2" /><rect x="7.1" y="12.8" width="3.8" height="3" fill="#f2f2f2" /><rect x="11.7" y="5.2" width="3.8" height="3" fill="#f2f2f2" /><rect x="11.7" y="9.0" width="3.8" height="3" fill="#f2f2f2" /><rect x="11.7" y="12.8" width="3.8" height="3" fill="#f2f2f2" /></svg>
<svg class="a" style="left:188px;top:540px;" width="21" height="21" viewBox="0 0 18 18"><rect x="2.5" y="2.5" width="13" height="13" fill="none" stroke="#f2f2f2" stroke-width="1.2" /><text x="4" y="9.500" font-size="8" font-weight="bold" fill="#f5e04a" font-family="Liberation Sans,sans-serif">A</text><path d="M10.500 5.500h3.500M10.500 8h3.500M4.500 11h9.500M4.500 13.500h9.500" fill="none" stroke="#f2f2f2" stroke-width="1" /></svg>
<div class="a" style="left:1422px;top:140px;width:27px;height:511px;background:#414a57;"></div>
<div class="a" style="left:1421px;top:140px;width:2px;height:511px;background:#8f9bab;"></div>
<div class="a" style="left:1423px;top:141px;width:26px;height:2px;background:#9aa5b4;"></div>
<div class="a" style="left:1423px;top:145px;width:26px;height:1px;background:#9aa5b4;"></div>
<div class="a" style="left:1423px;top:567px;width:26px;height:1px;background:#9aa5b4;"></div>
<div class="a" style="left:1423px;top:570px;width:26px;height:2px;background:#9aa5b4;"></div>
<svg class="a" style="left:1424px;top:149px;" width="20" height="20" viewBox="0 0 18 18"><g transform="rotate(-35 9 9)"><rect x="1.5" y="5.5" width="15" height="7" fill="#f2f2f2" rx="3.500"/><path d="M9 5.500h4a3.500 3.500 0 0 1 0 7H9z" fill="#6fb7f0" /></g></svg>
<svg class="a" style="left:1424px;top:172px;" width="20" height="20" viewBox="0 0 18 18"><path d="M3 11.500V2.500h9" fill="none" stroke="#f2f2f2" stroke-width="1.4" /><rect x="5.5" y="5.5" width="10" height="10" fill="none" stroke="#5aa5ea" stroke-width="1.5" /><path d="M10.500 8v5M8 10.500h5" fill="none" stroke="#f6a650" stroke-width="1.4" /></svg>
<svg class="a" style="left:1424px;top:195px;" width="20" height="20" viewBox="0 0 18 18"><path d="M7.500 3v12H2.500z" fill="none" stroke="#f2f2f2" stroke-width="1.2" /><path d="M10.500 3v12h5z" fill="#f6a650" /><path d="M9 1.500v15" fill="none" stroke="#f2f2f2" stroke-width="0.8" /></svg>
<svg class="a" style="left:1424px;top:218px;" width="20" height="20" viewBox="0 0 18 18"><path d="M4.500 14.500c-3 0-3-4 0-4.500 0-4 5-5.500 7-2.500 3.500 0 4 4.500 1 7z" fill="none" stroke="#f2f2f2" stroke-width="1.4" /><path d="M6 12.500h6M9 8.500v4" fill="none" stroke="#f6a650" stroke-width="1.4" /></svg>
<svg class="a" style="left:1424px;top:241px;" width="20" height="20" viewBox="0 0 18 18"><rect x="2.5" y="2.5" width="5.5" height="5.5" fill="#f6a01e" /><rect x="10" y="2.5" width="5.5" height="5.5" fill="#a9d4f7" /><rect x="2.5" y="10" width="5.5" height="5.5" fill="#a9d4f7" /><rect x="10" y="10" width="5.5" height="5.5" fill="#2f3640" /><path d="M10 15.500l5.500-5.500v5.500z" fill="#f2f2f2" /><path d="M10 10h5.500" fill="none" stroke="#f2f2f2" stroke-width="1" /></svg>
<svg class="a" style="left:1424px;top:264px;" width="20" height="20" viewBox="0 0 18 18"><path d="M9 2v14M2 9h14M6.500 4.500L9 2l2.500 2.500M6.500 13.500L9 16l2.500-2.500M4.500 6.500L2 9l2.500 2.500M13.500 6.500L16 9l-2.500 2.500" fill="none" stroke="#d5dae0" stroke-width="1.2" /></svg>
<svg class="a" style="left:1424px;top:287px;" width="20" height="20" viewBox="0 0 18 18"><path d="M9 3.500A6 6 0 1 0 15 9" fill="none" stroke="#aeb6c0" stroke-width="1.6" /><path d="M8 1l3.500 2.500L8 6.500" fill="none" stroke="#aeb6c0" stroke-width="1.4" /></svg>
<svg class="a" style="left:1424px;top:310px;" width="20" height="20" viewBox="0 0 18 18"><rect x="2.5" y="2.5" width="12" height="12" fill="none" stroke="#f2f2f2" stroke-width="1.4" /><rect x="10" y="10" width="5.5" height="5.5" fill="#414a57" stroke="#f2f2f2" stroke-width="1.1" /><path d="M11.500 13h2.500M12.500 11.500v3" fill="none" stroke="#f2f2f2" stroke-width="0.8" /><path d="M8 5.500h2" fill="none" stroke="#f2f2f2" stroke-width="1" /></svg>
<svg class="a" style="left:1424px;top:333px;" width="20" height="20" viewBox="0 0 18 18"><rect x="2.5" y="3.5" width="12.5" height="12" fill="none" stroke="#f2f2f2" stroke-width="1.4" /><path d="M9 13.500V7M6.500 9L9 6l2.500 3" fill="none" stroke="#f6b030" stroke-width="1.8" /><rect x="6" y="1.5" width="6" height="2.5" fill="#414a57" /></svg>
<svg class="a" style="left:1424px;top:355px;" width="20" height="20" viewBox="0 0 18 18"><path d="M2 11.500h5" fill="none" stroke="#6fb7f0" stroke-width="1" stroke-dasharray="1.2 1"/><path d="M7 11.500h9" fill="none" stroke="#f2f2f2" stroke-width="1.3" /><path d="M12 3L7 16" fill="none" stroke="#c8a860" stroke-width="1.4" /></svg>
<svg class="a" style="left:1424px;top:379px;" width="20" height="20" viewBox="0 0 18 18"><path d="M2 11h7" fill="none" stroke="#f2f2f2" stroke-width="1.4" stroke-dasharray="3 1.2"/><path d="M14 3L9.500 16" fill="none" stroke="#c8a860" stroke-width="1.4" /></svg>
<svg class="a" style="left:1424px;top:402px;" width="20" height="20" viewBox="0 0 18 18"><path d="M7 3.500H3.500v11.500h11.500V3.500H10" fill="none" stroke="#f2f2f2" stroke-width="1.4" /><circle cx="8.5" cy="3.5" r="0.9" fill="#35b8e0"/></svg>
<svg class="a" style="left:1424px;top:425px;" width="20" height="20" viewBox="0 0 18 18"><path d="M6 4H3.500v11h11.500V4H12" fill="none" stroke="#f2f2f2" stroke-width="1.4" /><circle cx="7.5" cy="4" r="0.9" fill="#35b8e0"/><circle cx="10.5" cy="4" r="0.9" fill="#35b8e0"/></svg>
<svg class="a" style="left:1424px;top:448px;" width="20" height="20" viewBox="0 0 18 18"><path d="M3.500 15.500V7h2M15 15.500V7h-2" fill="none" stroke="#f2f2f2" stroke-width="1.4" /><path d="M4 3.500h3.500M6 2l1.500 1.500L6 5M14.500 3.500H11M12.500 2L11 3.500 12.500 5" fill="none" stroke="#f5c842" stroke-width="1" /><circle cx="9.2" cy="3.5" r="0.9" fill="#c8a0e8"/></svg>
<svg class="a" style="left:1424px;top:471px;" width="20" height="20" viewBox="0 0 18 18"><path d="M3 15.500h12.500V3" fill="none" stroke="#f2f2f2" stroke-width="1.4" /><path d="M3 15.500V3h12.500" fill="none" stroke="#c8d0d8" stroke-width="1" stroke-dasharray="1.500 1.200"/><path d="M3.500 15L15 3.500" fill="none" stroke="#f2f2f2" stroke-width="1.3" /></svg>
<svg class="a" style="left:1424px;top:494px;" width="20" height="20" viewBox="0 0 18 18"><path d="M3 15.500h12.500V3" fill="none" stroke="#f2f2f2" stroke-width="1.4" /><path d="M3 15.500V9M9 3h6.500" fill="none" stroke="#c8d0d8" stroke-width="1" stroke-dasharray="1.500 1.200"/><path d="M3 15.500C3 8 7 3.500 13 3" fill="none" stroke="#d8c860" stroke-width="1.3" /></svg>
<svg class="a" style="left:1424px;top:516px;" width="20" height="20" viewBox="0 0 18 18"><circle cx="8" cy="10" r="5.8" fill="#c4c8ce"/><circle cx="8" cy="10" r="2.5" fill="none" stroke="#e8eaee" stroke-width="1"/><path d="M13.500 1.500v5M11 4h5M11.800 2.300l3.400 3.400M15.200 2.300l-3.400 3.400" fill="none" stroke="#f5c842" stroke-width="1" /></svg>
<svg class="a" style="left:1424px;top:540px;" width="20" height="20" viewBox="0 0 18 18"><path d="M3 2.500v13.500M3 4.500h11.500V9M8 2.500V16M3 10.500h6" fill="none" stroke="#4fa8ee" stroke-width="1.4" /><circle cx="8" cy="7.5" r="1.2" fill="none" stroke="#4fa8ee" stroke-width="1"/><path d="M10 13l3-3 3.500 2.500-2.500 3.500h-2.500z" fill="#8ab4dc" /><path d="M10.500 13.500l3 2.500" fill="none" stroke="#f2f2f2" stroke-width="0.8" /></svg>
<svg class="a" style="left:1424px;top:575px;" width="20" height="20" viewBox="0 0 18 18"><path d="M2.500 8V2.500h5.500M15.500 10.500v5.500h-5.500" fill="none" stroke="#f2f2f2" stroke-width="1.5" /><rect x="5" y="5" width="8.5" height="8.5" fill="#5ab0f5" /></svg>
<svg class="a" style="left:1424px;top:598px;" width="20" height="20" viewBox="0 0 18 18"><rect x="2.5" y="2.5" width="7" height="7" fill="#f2f2f2" /><rect x="9.5" y="9.5" width="7" height="7" fill="#f2f2f2" /><rect x="10.5" y="5" width="3.5" height="3.5" fill="#5a90c8" /><rect x="4.5" y="11" width="3.5" height="3.5" fill="#5a90c8" /></svg>
<svg class="a" style="left:1424px;top:621px;" width="20" height="20" viewBox="0 0 18 18"><path d="M6.500 9V3h8" fill="none" stroke="#f2f2f2" stroke-width="2" /><rect x="8" y="7" width="8" height="8" fill="#5ab0f5" /><path d="M3 8v6.500h3M4.500 13l1.500 1.500-1.500 1.500" fill="none" stroke="#e8b860" stroke-width="1" /></svg>
<svg class="a" style="left:1426px;top:645px;" width="18" height="7" viewBox="0 0 18 7"><path d="M4 4.500h8" fill="none" stroke="#5ab0f5" stroke-width="1.5" /><path d="M13.500 2l2 4h-4z" fill="#e8b860" /></svg>
<div class="a" style="left:186px;top:655px;width:1262px;height:234px;background:#474d56;"></div>
<div class="a" style="left:186px;top:655px;width:25px;height:234px;background:#4d5968;"></div>
<div class="a" style="left:190px;top:668px;width:16px;height:17px;background:#f2f2f2;"></div>
<div class="a" style="left:212px;top:661px;width:409px;height:206px;background:#000;"></div>
<div class="a" style="left:625px;top:661px;width:409px;height:206px;background:#000;"></div>
<div class="a" style="left:1038px;top:661px;width:409px;height:206px;background:#000;"></div>
<svg class="a" style="left:0;top:0" width="1673" height="1007" viewBox="0 0 1673 1007"><polyline points="287.2,703.2 287.2,828.3" fill="none" stroke="#2ee62e" stroke-width="1" /><polyline points="308.4,729.4 308.4,828.3" fill="none" stroke="#2ee62e" stroke-width="1" /><polyline points="283,703.2 299.6,703.2" fill="none" stroke="#2ee62e" stroke-width="1" /><polyline points="283,729.4 320.8,729.4" fill="none" stroke="#2ee62e" stroke-width="1" /><polyline points="295,805.5 320.8,805.5" fill="none" stroke="#2ee62e" stroke-width="1" /><polyline points="283,828.3 320.8,828.3" fill="none" stroke="#2ee62e" stroke-width="1" /><text x="284.5" y="715.6" font-size="11.5" fill="#2ee62e" textLength="18" lengthAdjust="spacingAndGlyphs" text-anchor="middle" font-weight="normal" font-family="Liberation Sans,sans-serif" transform="rotate(-90 284.5 715.6)">3.06</text><text x="284.5" y="778.9" font-size="11.5" fill="#2ee62e" textLength="23" lengthAdjust="spacingAndGlyphs" text-anchor="middle" font-weight="normal" font-family="Liberation Sans,sans-serif" transform="rotate(-90 284.5 778.9)">12.00</text><text x="305.5" y="767" font-size="11.5" fill="#2ee62e" textLength="18" lengthAdjust="spacingAndGlyphs" text-anchor="middle" font-weight="normal" font-family="Liberation Sans,sans-serif" transform="rotate(-90 305.5 767)">9.25</text><text x="305.5" y="817.3" font-size="11.5" fill="#2ee62e" textLength="18" lengthAdjust="spacingAndGlyphs" text-anchor="middle" font-weight="normal" font-family="Liberation Sans,sans-serif" transform="rotate(-90 305.5 817.3)">2.75</text><polyline points="397.2,729.4 367,729.4 339,829.7 338,838 376.6,845.7 397.2,729.4" fill="none" stroke="#d428d8" stroke-width="1.1" /><polyline points="321.6,805.5 341.7,846.2 378,846.2 395,811" fill="none" stroke="#e8e040" stroke-width="1.1" /><polyline points="295,805.5 329.8,804.4 427.5,813.2 436.3,813.2 482.4,796.7" fill="none" stroke="#f2f2f2" stroke-width="1.1" /><polyline points="398,728.5 435.7,703.2 482.4,701" fill="none" stroke="#e02020" stroke-width="1.1" /><polyline points="482.4,701 482.4,805" fill="none" stroke="#1414e0" stroke-width="1.3" /><path d="M393.5 720h8L397.5 726z" stroke="#2ee62e" fill="none" stroke-width="1"/><path d="M431.7 696h8L435.7 702z" stroke="#2ee62e" fill="none" stroke-width="1"/><path d="M478.4 694h8L482.4 700z" stroke="#2ee62e" fill="none" stroke-width="1"/><path d="M369.8 839h8L373.8 845z" stroke="#2ee62e" fill="none" stroke-width="1"/><text x="392.5" y="717.8" font-size="12.5" fill="#2ee62e" textLength="31.5" lengthAdjust="spacingAndGlyphs" text-anchor="start" font-weight="normal" font-family="Liberation Sans,sans-serif">502.67</text><text x="430.2" y="692.8" font-size="12.5" fill="#2ee62e" textLength="31.5" lengthAdjust="spacingAndGlyphs" text-anchor="start" font-weight="normal" font-family="Liberation Sans,sans-serif">505.74</text><text x="477.5" y="690.9" font-size="12.5" fill="#2ee62e" textLength="30" lengthAdjust="spacingAndGlyphs" text-anchor="start" font-weight="normal" font-family="Liberation Sans,sans-serif">506.00</text><text x="379.3" y="846" font-size="12.5" fill="#2ee62e" textLength="33" lengthAdjust="spacingAndGlyphs" text-anchor="start" font-weight="normal" font-family="Liberation Sans,sans-serif">488.59</text><text x="481.6" y="821" font-size="18" fill="#2ee62e" textLength="78" lengthAdjust="spacingAndGlyphs" text-anchor="start" font-weight="normal" font-family="Liberation Sans,sans-serif">K1+218.027</text><text x="482" y="837.4" font-size="13" fill="#2ee62e" textLength="60" lengthAdjust="spacingAndGlyphs" text-anchor="start" font-weight="normal" font-family="Liberation Sans,sans-serif">WJ = 32.334</text><polyline points="716.7,702.4 716.7,821.5" fill="none" stroke="#2ee62e" stroke-width="1" /><polyline points="736.5,727.4 736.5,846.2" fill="none" stroke="#2ee62e" stroke-width="1" /><polyline points="712.6,702.4 728.8,702.4" fill="none" stroke="#2ee62e" stroke-width="1" /><polyline points="712.6,727.4 748.9,727.4" fill="none" stroke="#2ee62e" stroke-width="1" /><polyline points="724,800.8 748.9,800.8" fill="none" stroke="#2ee62e" stroke-width="1" /><polyline points="712.6,821.5 748.9,821.5" fill="none" stroke="#2ee62e" stroke-width="1" /><text x="714" y="714.8" font-size="11.5" fill="#2ee62e" textLength="18" lengthAdjust="spacingAndGlyphs" text-anchor="middle" font-weight="normal" font-family="Liberation Sans,sans-serif" transform="rotate(-90 714 714.8)">3.12</text><text x="714" y="774.7" font-size="11.5" fill="#2ee62e" textLength="23" lengthAdjust="spacingAndGlyphs" text-anchor="middle" font-weight="normal" font-family="Liberation Sans,sans-serif" transform="rotate(-90 714 774.7)">11.87</text><text x="733.5" y="764.3" font-size="11.5" fill="#2ee62e" textLength="18" lengthAdjust="spacingAndGlyphs" text-anchor="middle" font-weight="normal" font-family="Liberation Sans,sans-serif" transform="rotate(-90 733.5 764.3)">9.32</text><text x="733.5" y="833.8" font-size="11.5" fill="#2ee62e" textLength="18" lengthAdjust="spacingAndGlyphs" text-anchor="middle" font-weight="normal" font-family="Liberation Sans,sans-serif" transform="rotate(-90 733.5 833.8)">2.55</text><polyline points="819.5,727.4 791.5,727.4 765.9,822 764.8,830.5 799.7,836.6 819.5,727.4" fill="none" stroke="#d428d8" stroke-width="1.1" /><polyline points="748.9,800.8 767.3,838 801,838 816.8,805" fill="none" stroke="#e8e040" stroke-width="1.1" /><polyline points="724,801.4 748.9,801 849.2,807.7 856.6,808.3 901.5,790.4" fill="none" stroke="#f2f2f2" stroke-width="1.1" /><polyline points="820,726.5 856,702.7 901.5,700" fill="none" stroke="#e02020" stroke-width="1.1" /><polyline points="901.5,700 901.5,799.5" fill="none" stroke="#1414e0" stroke-width="1.3" /><path d="M815.5 719h8L819.5 725z" stroke="#2ee62e" fill="none" stroke-width="1"/><path d="M852 695.5h8L856 701.5z" stroke="#2ee62e" fill="none" stroke-width="1"/><path d="M897.5 693h8L901.5 699z" stroke="#2ee62e" fill="none" stroke-width="1"/><path d="M793.5 830.5h8L797.5 836.5z" stroke="#2ee62e" fill="none" stroke-width="1"/><text x="814.3" y="717" font-size="12.5" fill="#2ee62e" textLength="31.5" lengthAdjust="spacingAndGlyphs" text-anchor="start" font-weight="normal" font-family="Liberation Sans,sans-serif">502.75</text><text x="851.4" y="692.2" font-size="12.5" fill="#2ee62e" textLength="31.5" lengthAdjust="spacingAndGlyphs" text-anchor="start" font-weight="normal" font-family="Liberation Sans,sans-serif">505.87</text><text x="896.5" y="690.9" font-size="12.5" fill="#2ee62e" textLength="29" lengthAdjust="spacingAndGlyphs" text-anchor="start" font-weight="normal" font-family="Liberation Sans,sans-serif">506.12</text><text x="802.5" y="838" font-size="12.5" fill="#2ee62e" textLength="32" lengthAdjust="spacingAndGlyphs" text-anchor="start" font-weight="normal" font-family="Liberation Sans,sans-serif">488.83</text><text x="900.6" y="815" font-size="18" fill="#2ee62e" textLength="48" lengthAdjust="spacingAndGlyphs" text-anchor="start" font-weight="normal" font-family="Liberation Sans,sans-serif">K1+220</text><text x="901" y="831" font-size="13" fill="#2ee62e" textLength="55" lengthAdjust="spacingAndGlyphs" text-anchor="start" font-weight="normal" font-family="Liberation Sans,sans-serif">WJ = 30.084</text><polyline points="1115.4,704.6 1115.4,830.3" fill="none" stroke="#2ee62e" stroke-width="1" /><polyline points="1137.4,737 1137.4,830.3" fill="none" stroke="#2ee62e" stroke-width="1" /><polyline points="1111.3,704.6 1128.6,704.6" fill="none" stroke="#2ee62e" stroke-width="1" /><polyline points="1111.3,737 1151.4,737" fill="none" stroke="#2ee62e" stroke-width="1" /><polyline points="1132.7,798 1151.4,798" fill="none" stroke="#2ee62e" stroke-width="1" /><polyline points="1111.3,830.3 1151.4,830.3" fill="none" stroke="#2ee62e" stroke-width="1" /><text x="1112.5" y="720.6" font-size="11.5" fill="#2ee62e" textLength="18" lengthAdjust="spacingAndGlyphs" text-anchor="middle" font-weight="normal" font-family="Liberation Sans,sans-serif" transform="rotate(-90 1112.5 720.6)">3.69</text><text x="1112.5" y="784.4" font-size="11.5" fill="#2ee62e" textLength="23" lengthAdjust="spacingAndGlyphs" text-anchor="middle" font-weight="normal" font-family="Liberation Sans,sans-serif" transform="rotate(-90 1112.5 784.4)">10.54</text><text x="1134.5" y="767" font-size="11.5" fill="#2ee62e" textLength="18" lengthAdjust="spacingAndGlyphs" text-anchor="middle" font-weight="normal" font-family="Liberation Sans,sans-serif" transform="rotate(-90 1134.5 767)">6.82</text><text x="1134.5" y="813.2" font-size="11.5" fill="#2ee62e" textLength="17" lengthAdjust="spacingAndGlyphs" text-anchor="middle" font-weight="normal" font-family="Liberation Sans,sans-serif" transform="rotate(-90 1134.5 813.2)">3.71</text><polyline points="1227.6,737 1199.3,737 1175.9,829.7 1172,831 1171.2,839.3 1204.8,845.7 1227.6,737" fill="none" stroke="#d428d8" stroke-width="1.1" /><polyline points="1151.4,799.5 1174,846.2 1206.4,846.2 1229.5,799.5" fill="none" stroke="#e8e040" stroke-width="1.1" /><polyline points="1124,802.2 1171.2,797.5 1229,799.5 1273,802.2 1282.6,802.2 1324.6,788.5" fill="none" stroke="#f2f2f2" stroke-width="1.1" /><polyline points="1228,736 1276.3,704.6 1324.6,702.7" fill="none" stroke="#e02020" stroke-width="1.1" /><polyline points="1324.6,702.7 1324.6,798" fill="none" stroke="#1414e0" stroke-width="1.3" /><path d="M1223.6 729h8L1227.6 735z" stroke="#2ee62e" fill="none" stroke-width="1"/><path d="M1272.3 697.5h8L1276.3 703.5z" stroke="#2ee62e" fill="none" stroke-width="1"/><path d="M1320.6 695.5h8L1324.6 701.5z" stroke="#2ee62e" fill="none" stroke-width="1"/><path d="M1198 839h8L1202 845z" stroke="#2ee62e" fill="none" stroke-width="1"/><text x="1222" y="725.8" font-size="12.5" fill="#2ee62e" textLength="34" lengthAdjust="spacingAndGlyphs" text-anchor="start" font-weight="normal" font-family="Liberation Sans,sans-serif">503.46</text><text x="1271.6" y="692.2" font-size="12.5" fill="#2ee62e" textLength="31" lengthAdjust="spacingAndGlyphs" text-anchor="start" font-weight="normal" font-family="Liberation Sans,sans-serif">507.15</text><text x="1319" y="690.9" font-size="12.5" fill="#2ee62e" textLength="34.5" lengthAdjust="spacingAndGlyphs" text-anchor="start" font-weight="normal" font-family="Liberation Sans,sans-serif">507.32</text><text x="1207.8" y="846.8" font-size="12.5" fill="#2ee62e" textLength="30" lengthAdjust="spacingAndGlyphs" text-anchor="start" font-weight="normal" font-family="Liberation Sans,sans-serif">491.18</text><text x="1323.3" y="815.4" font-size="18" fill="#2ee62e" textLength="54" lengthAdjust="spacingAndGlyphs" text-anchor="start" font-weight="normal" font-family="Liberation Sans,sans-serif">K1+240</text><text x="1324" y="833.8" font-size="13" fill="#2ee62e" textLength="61" lengthAdjust="spacingAndGlyphs" text-anchor="start" font-weight="normal" font-family="Liberation Sans,sans-serif">WJ = 34.170</text></svg>
<div class="a" style="left:212px;top:871px;width:98px;height:17px;background:#ffffff;"></div>
<div class="a t" style="left:216px;top:875.0px;height:14px;line-height:14px;font-size:11.5px;color:#000;font-family:'Liberation Mono',monospace;letter-spacing:-1.00px;">K1+218.027</div>
<svg class="a" style="left:296px;top:877px;" width="10" height="7" viewBox="0 0 10 7"><path d="M1 1.500l4 4 4-4" stroke="#444" fill="none" stroke-width="1.1"/></svg>
<div class="a" style="left:312px;top:870px;width:1136px;height:18px;background:#f0f0f0;box-sizing:border-box;border-top:1px solid #fff;border-bottom:1px solid #fff;"></div>
<div class="a" style="left:328px;top:871px;width:17px;height:16px;background:#cdcdcd;"></div>
<svg class="a" style="left:312px;top:870px;" width="1136" height="18" viewBox="0 0 1136 18"><path d="M10 5l-4 4 4 4M1126 5l4 4-4 4" stroke="#505050" fill="none" stroke-width="2"/></svg>
<div class="a" style="left:186px;top:889px;width:1262px;height:95px;background:#2b2e33;"></div>
<div class="a" style="left:186px;top:891px;width:21px;height:92px;background:#363c46;"></div>
<svg class="a" style="left:192px;top:895px;" width="10" height="10" viewBox="0 0 10 10"><path d="M1.500 1.500l7 7M8.500 1.500l-7 7" stroke="#6e7884" stroke-width="1.8"/></svg>
<div class="a t" style="left:208px;top:890px;height:20px;line-height:20px;color:#c9ccd0;"><span style="font-family:'Noto Serif CJK SC',serif;font-size:16px;font-weight:300;"></span><span style="font-family:'Liberation Mono',monospace;font-size:13.3px;">BEGIN_DS</span></div>
<div class="a t" style="left:208px;top:908px;height:20px;line-height:20px;color:#c9ccd0;"><span style="font-family:'Noto Serif CJK SC',serif;font-size:16px;font-weight:300;">命令</span><span style="font-family:'Liberation Mono',monospace;font-size:13.3px;">:</span></div>
<div class="a t" style="left:208px;top:926px;height:20px;line-height:20px;color:#c9ccd0;"><span style="font-family:'Noto Serif CJK SC',serif;font-size:16px;font-weight:300;">指定对角点</span><span style="font-family:'Liberation Mono',monospace;font-size:13.3px;">:</span></div>
<div class="a" style="left:207px;top:960px;width:1228px;height:1px;background:#5a626c;"></div>
<div class="a t" style="left:208px;top:960px;height:20px;line-height:20px;color:#c9ccd0;"><span style="font-family:'Noto Serif CJK SC',serif;font-size:16px;font-weight:300;">命令</span><span style="font-family:'Liberation Mono',monospace;font-size:13.3px;">:</span></div>
<div class="a" style="left:259px;top:962px;width:1px;height:17px;background:#d0d0d0;"></div>
<div class="a" style="left:1434px;top:891px;width:14px;height:68px;background:#3a3f46;"></div>
<div class="a" style="left:1435px;top:937px;width:12px;height:6px;background:#6a707a;"></div>
<svg class="a" style="left:1434px;top:891px;" width="14" height="68" viewBox="0 0 14 68"><path d="M3.500 12.500l3.500-3.500 3.500 3.500M3.500 55l3.500 3.500 3.500-3.500" stroke="#7a828c" fill="none" stroke-width="1.2"/></svg>
<div class="a" style="left:0px;top:984px;width:1673px;height:23px;background:#2f3640;"></div>
<div class="a t" style="left:12px;top:990.5px;height:14px;line-height:14px;font-size:11.5px;color:#e6e8ea;font-family:'Liberation Mono',monospace;letter-spacing:-1.01px;">1145.1635, 533.2241, 0.0000</div>
<div class="a" style="left:407px;top:986px;width:20px;height:21px;background:#4a607e;box-sizing:border-box;border:1px solid #6a84a8;border-bottom:none;"></div>
<div class="a" style="left:431px;top:986px;width:20px;height:21px;background:#4a607e;box-sizing:border-box;border:1px solid #6a84a8;border-bottom:none;"></div>
<div class="a" style="left:479px;top:986px;width:20px;height:21px;background:#4a607e;box-sizing:border-box;border:1px solid #6a84a8;border-bottom:none;"></div>
<div class="a" style="left:527px;top:986px;width:20px;height:21px;background:#4a607e;box-sizing:border-box;border:1px solid #6a84a8;border-bottom:none;"></div>
<svg class="a" style="left:264px;top:987px;" width="18" height="18" viewBox="0 0 18 18"><rect x="2.5" y="2.5" width="13" height="13" fill="none" stroke="#f2f2f2" stroke-width="1.4" /><path d="M7 2.500v13M11.500 2.500v13M2.500 7h13M2.500 11.500h13" fill="none" stroke="#f2f2f2" stroke-width="1.3" /><path d="M16 3v13H3" fill="none" stroke="#4f9ee8" stroke-width="1.2" /></svg>
<svg class="a" style="left:288px;top:987px;" width="18" height="18" viewBox="0 0 18 18"><rect x="2.5" y="2.5" width="13" height="13" fill="#2c5a94" stroke="#f2f2f2" stroke-width="1.4" /><path d="M7 2.500v13M11.500 2.500v13M2.500 7h13M2.500 11.500h13" fill="none" stroke="#f2f2f2" stroke-width="1.3" /></svg>
<svg class="a" style="left:312px;top:987px;" width="18" height="18" viewBox="0 0 18 18"><path d="M3.500 2v13.500H16" fill="none" stroke="#f2f2f2" stroke-width="1.4" /><rect x="4.5" y="10.5" width="4" height="4" fill="#2a7a8a" /></svg>
<svg class="a" style="left:336px;top:987px;" width="18" height="18" viewBox="0 0 18 18"><circle cx="9" cy="9.5" r="6" fill="none" stroke="#f2f2f2" stroke-width="1.4"/><path d="M9 9.500h6M9 9.500L14.500 4" fill="none" stroke="#f2f2f2" stroke-width="1.2" /></svg>
<svg class="a" style="left:360px;top:987px;" width="18" height="18" viewBox="0 0 18 18"><rect x="3" y="3" width="12.5" height="12.5" fill="none" stroke="#f2f2f2" stroke-width="1.4" /><rect x="2.5" y="2.5" width="4" height="4" fill="none" stroke="#f04040" stroke-width="1.3" /></svg>
<svg class="a" style="left:384px;top:987px;" width="18" height="18" viewBox="0 0 18 18"><path d="M2.500 15h13.500M3 15L15 3.500" fill="none" stroke="#f2f2f2" stroke-width="1.3" /><circle cx="9" cy="9.5" r="1.3" fill="none" stroke="#6fb7f0" stroke-width="1"/></svg>
<svg class="a" style="left:408px;top:987px;" width="18" height="18" viewBox="0 0 18 18"><path d="M4 2v13.500h13M4 15.500L11 8.500M1.500 5L4 2l2.500 3M14 13l3 2.500-3 2.500" fill="none" stroke="#f2f2f2" stroke-width="1.2" /><path d="M14 2l-4 5.500h3L11.500 12l5-6.500h-3z" fill="#f5c842" /></svg>
<svg class="a" style="left:432px;top:987px;" width="18" height="18" viewBox="0 0 18 18"><path d="M5 2.500v8M1 6.500h8" fill="none" stroke="#f2f2f2" stroke-width="1.5" /><rect x="8" y="10" width="8.5" height="4" fill="none" stroke="#6fb7f0" stroke-width="1.4" /></svg>
<svg class="a" style="left:456px;top:987px;" width="18" height="18" viewBox="0 0 18 18"><path d="M2.500 4.500h13M2.500 9h13M2.500 13.500h13" fill="none" stroke="#f2f2f2" stroke-width="2.6" /></svg>
<svg class="a" style="left:480px;top:987px;" width="18" height="18" viewBox="0 0 18 18"><rect x="2.5" y="2.5" width="13" height="13" fill="#b8bcc2" stroke="#f2f2f2" stroke-width="1.4" rx="2.500"/><path d="M4 5h10M4 7h10M4 9h10M4 11h10M4 13h10" fill="none" stroke="#55595f" stroke-width="0.8" stroke-dasharray="1 1"/></svg>
<svg class="a" style="left:504px;top:987px;" width="18" height="18" viewBox="0 0 18 18"><path d="M4.500 1.500v7M1 5h7" fill="none" stroke="#f2f2f2" stroke-width="1.5" /><rect x="7.5" y="8" width="5" height="5" fill="none" stroke="#f2f2f2" stroke-width="1.2" /><rect x="10.5" y="11" width="5" height="5" fill="#2f3640" stroke="#6fb7f0" stroke-width="1.2" /></svg>
<svg class="a" style="left:528px;top:987px;" width="18" height="18" viewBox="0 0 18 18"><rect x="6" y="1.5" width="9.5" height="9.5" fill="none" stroke="#f2f2f2" stroke-width="1.2" /><path d="M9.200 1.500v9.500M12.400 1.500v9.500M6 4.700h9.500M6 7.900h9.500" fill="none" stroke="#f2f2f2" stroke-width="1" /><rect x="1.5" y="8" width="8.5" height="8.5" fill="#3a78c0" stroke="#6fb7f0" stroke-width="1" stroke-dasharray="1.500 1"/><path d="M13 13.500c2 0 3-1 3-3M14.500 12l-1.500 1.500 1.500 1.500" fill="none" stroke="#d8d060" stroke-width="1" /></svg>
<svg class="a" style="left:1421px;top:987px;" width="18" height="18" viewBox="0 0 18 18"><path d="M2 1.500v15M16 1.500v15M2 3.500h14M2 14.500h14" fill="none" stroke="#6fb7f0" stroke-width="1.2" /><text x="9" y="12.500" font-size="8" fill="#e8eef4" text-anchor="middle" font-family="Liberation Sans,sans-serif">0.0</text></svg>
<div class="a t" style="left:1441px;top:987.5px;height:16px;line-height:16px;font-size:12px;color:#d8dce0;white-space:nowrap;">毫米</div>
<svg class="a" style="left:1469px;top:992px;" width="10" height="6" viewBox="0 0 10 6"><path d="M0 0h10l-5 6z" fill="#f2f2f2"/></svg>
<svg class="a" style="left:1486px;top:986px;" width="19" height="19" viewBox="0 0 18 18"><path d="M9 .500c.800 2.500 1.800 5.500 3 8.500 1.300 2.800 3 5.500 5 8-2-.500-4.200-1.800-5.700-3.300L9 17.500l-2.300-3.800C5.200 15.200 3 16.500 1 17c2-2.500 3.700-5.200 5-8C7.200 6 8.200 3 9 .500z" fill="#9ccaf2" /><path d="M9 3.500l1.300 5 2.200 4-2.500-1.500-1 3-1-3-2.500 1.500 2.200-4z" fill="#d4e9fb" /></svg>
<div class="a t" style="left:1507px;top:988.0px;height:16px;line-height:16px;font-size:12px;color:#c0c4c8;font-family:'Liberation Serif',serif;letter-spacing:1px;white-space:nowrap;">1:1</div>
<svg class="a" style="left:1529px;top:992px;" width="10" height="6" viewBox="0 0 10 6"><path d="M0 0h10l-5 6z" fill="#f2f2f2"/></svg>
<svg class="a" style="left:1546px;top:986px;" width="19" height="19" viewBox="0 0 18 18"><path d="M9 .500c.800 2.500 1.800 5.500 3 8.500 1.300 2.800 3 5.500 5 8-2-.500-4.200-1.800-5.700-3.300L9 17.500l-2.300-3.800C5.200 15.200 3 16.500 1 17c2-2.500 3.700-5.200 5-8C7.200 6 8.200 3 9 .500z" fill="#9ccaf2" /><path d="M9 3.500l1.300 5 2.200 4-2.500-1.500-1 3-1-3-2.500 1.500 2.200-4z" fill="#d4e9fb" /><circle cx="13.5" cy="14.5" r="2.5" fill="#f5c842"/></svg>
<svg class="a" style="left:1568px;top:986px;" width="19" height="19" viewBox="0 0 18 18"><path d="M9 .500c.800 2.500 1.800 5.500 3 8.500 1.300 2.800 3 5.500 5 8-2-.500-4.200-1.800-5.700-3.300L9 17.500l-2.300-3.800C5.200 15.200 3 16.500 1 17c2-2.500 3.700-5.200 5-8C7.200 6 8.200 3 9 .500z" fill="#9ccaf2" /><path d="M9 3.500l1.300 5 2.200 4-2.500-1.500-1 3-1-3-2.500 1.500 2.200-4z" fill="#d4e9fb" /><path d="M2.500 1.500l4.500 2-2.500 1 2 3-3-2-1 2.500z" fill="#e8f2fc" /></svg>
<svg class="a" style="left:1590px;top:987px;" width="18" height="18" viewBox="0 0 18 18"><path d="M8 6H2.500v7H8" fill="none" stroke="#f2f2f2" stroke-width="1.3" /><circle cx="12" cy="5.5" r="3.5" fill="none" stroke="#f2f2f2" stroke-width="1.3"/><path d="M10 10.500l3 3-3 3-3-3z" fill="none" stroke="#f2f2f2" stroke-width="1.1" /></svg>
<svg class="a" style="left:1614px;top:988px;" width="16" height="16" viewBox="0 0 18 18"><rect x="8" y="0.800" width="2.400" height="4" fill="#4f9ee8" transform="rotate(0 9.200 9.200)"/><rect x="8" y="0.800" width="2.400" height="4" fill="#4f9ee8" transform="rotate(45 9.200 9.200)"/><rect x="8" y="0.800" width="2.400" height="4" fill="#4f9ee8" transform="rotate(90 9.200 9.200)"/><rect x="8" y="0.800" width="2.400" height="4" fill="#4f9ee8" transform="rotate(135 9.200 9.200)"/><rect x="8" y="0.800" width="2.400" height="4" fill="#4f9ee8" transform="rotate(180 9.200 9.200)"/><rect x="8" y="0.800" width="2.400" height="4" fill="#4f9ee8" transform="rotate(225 9.200 9.200)"/><rect x="8" y="0.800" width="2.400" height="4" fill="#4f9ee8" transform="rotate(270 9.200 9.200)"/><rect x="8" y="0.800" width="2.400" height="4" fill="#4f9ee8" transform="rotate(315 9.200 9.200)"/><circle cx="9.2" cy="9.2" r="4.5" fill="none" stroke="#4f9ee8" stroke-width="2.4"/></svg>
<svg class="a" style="left:1635px;top:987px;" width="18" height="18" viewBox="0 0 18 18"><path d="M2.500 7V2.500H7M11 2.500h4.500V7M15.500 11v4.500H11M7 15.500H2.500V11M3 3l4.500 4.500M15 3l-4.500 4.500M15 15l-4.500-4.500M3 15l4.500-4.500" fill="none" stroke="#f2f2f2" stroke-width="1.3" /></svg>
<svg class="a" style="left:1657px;top:987px;" width="16" height="18" viewBox="0 0 16 18"><path d="M0 3.500h16M0 9h16M0 14.500h16" fill="none" stroke="#6fb7f0" stroke-width="2" /></svg>
<div class="a" style="left:1420px;top:138px;width:253px;height:3px;background:#2f3640;"></div>
<div class="a" style="left:1448px;top:140px;width:7px;height:845px;background:#2f3640;"></div>
<div class="a" style="left:1455px;top:140px;width:218px;height:845px;background:#404956;"></div>
<div class="a" style="left:1455px;top:141px;width:218px;height:22px;background:#4d5968;"></div>
<div class="a t" style="left:1466px;top:142.0px;height:20px;line-height:20px;font-size:15px;color:#fff;font-weight:bold;letter-spacing:.5px;">特性</div>
<svg class="a" style="left:1656px;top:145px;" width="12" height="12" viewBox="0 0 12 12"><path d="M1.500 1.500l9 9M10.500 1.500l-9 9" stroke="#f2f2f2" stroke-width="1.2"/></svg>
<div class="a t" style="left:1468px;top:176.5px;height:16px;line-height:16px;font-size:12px;color:#e4e7ea;">纬地挡墙</div>
<svg class="a" style="left:1581px;top:181px;" width="10" height="6" viewBox="0 0 10 6"><path d="M0 0h10l-5 6z" fill="#f2f2f2"/></svg>
<div class="a" style="left:1463px;top:196px;width:131px;height:1px;background:#566170;"></div>
<div class="a" style="left:1600px;top:172px;width:19px;height:20px;box-sizing:border-box;border:1px dotted #5d6876;"></div>
<div class="a" style="left:1624px;top:172px;width:19px;height:20px;box-sizing:border-box;border:1px dotted #5d6876;"></div>
<div class="a" style="left:1647px;top:172px;width:19px;height:20px;box-sizing:border-box;border:1px dotted #5d6876;"></div>
<svg class="a" style="left:1600px;top:173px;" width="18" height="18" viewBox="0 0 18 18"><path d="M3 11V3h8" fill="none" stroke="#f2f2f2" stroke-width="1.2" /><rect x="6" y="6" width="9" height="9" fill="none" stroke="#f2f2f2" stroke-width="1.2" /><path d="M10.500 8.500v4M8.500 10.500h4" fill="none" stroke="#f2f2f2" stroke-width="1" /><rect x="3" y="3" width="8" height="8" fill="none" stroke="#f2f2f2" stroke-width="1.2" /></svg>
<svg class="a" style="left:1624px;top:173px;" width="18" height="18" viewBox="0 0 18 18"><rect x="7" y="2" width="9" height="9" fill="#5ab0f5" /><path d="M9 15.500A4.500 4.500 0 1 1 6 7" fill="none" stroke="#f2f2f2" stroke-width="1.2" /><path d="M11 9v7l1.500-1.500 1 2 1-.5-1-2h2z" fill="#f2f2f2" stroke="#333" stroke-width="0.5" /></svg>
<svg class="a" style="left:1648px;top:173px;" width="18" height="18" viewBox="0 0 18 18"><path d="M3 2.500v10l2.500-2 1.500 3.500 1.500-.7-1.500-3.300h3z" fill="#f2f2f2" stroke="#222" stroke-width="0.6" /><path d="M14 2l-4 6h3l-2 5.500 5-7h-3z" fill="#f5c842" /></svg>
<div class="a" style="left:1463px;top:219px;width:180px;height:1px;background:#4f5966;"></div>
<div class="a" style="left:1463px;top:245px;width:180px;height:1px;background:#4f5966;"></div>
<div class="a" style="left:1530px;top:219px;width:1px;height:26px;background:#4f5966;"></div>
<div class="a t" style="left:1468px;top:226.0px;height:16px;line-height:16px;font-size:12px;color:#e4e7ea;white-space:nowrap;">墙外排水沟</div>
<div class="a t" style="left:1534px;top:224.5px;height:16px;line-height:16px;font-size:12px;color:#e4e7ea;">否</div>
<div class="a" style="left:1652px;top:219px;width:15px;height:636px;background:#333b46;"></div>
<div class="a" style="left:1652px;top:419px;width:15px;height:306px;background:#4d5968;"></div>
<svg class="a" style="left:1652px;top:219px;" width="15" height="634" viewBox="0 0 15 634"><path d="M4 13l3.500-3.500L11 13M4 625l3.500 3.500 3.500-3.500" stroke="#6e7884" fill="none" stroke-width="1.2"/></svg>
<div class="a t" style="left:1468px;top:276.5px;height:16px;line-height:16px;font-size:12px;color:#e4e7ea;">参数</div><svg class="a" style="left:1627px;top:283px;" width="10" height="6" viewBox="0 0 10 6"><path d="M0 0h10l-5 6z" fill="#e8ecf0"/></svg><div class="a" style="left:1463px;top:294px;width:180px;height:1px;background:#c8d0d8;"></div>
<div class="a t" style="left:1468px;top:302.0px;height:16px;line-height:16px;font-size:12px;color:#e4e7ea;white-space:nowrap;">墙长</div><div class="a t" style="left:1534px;top:300.0px;height:16px;line-height:16px;font-size:12px;color:#e4e7ea;white-space:nowrap;">31.8204</div><div class="a" style="left:1463px;top:320px;width:180px;height:1px;background:#4f5966;"></div>
<div class="a t" style="left:1468px;top:327.0px;height:16px;line-height:16px;font-size:12px;color:#e4e7ea;white-space:nowrap;">墙高</div><div class="a t" style="left:1534px;top:325.0px;height:16px;line-height:16px;font-size:12px;color:#e4e7ea;white-space:nowrap;">12</div><div class="a" style="left:1463px;top:345px;width:180px;height:1px;background:#4f5966;"></div>
<div class="a t" style="left:1468px;top:352.0px;height:16px;line-height:16px;font-size:12px;color:#e4e7ea;white-space:nowrap;">起点墙高</div><div class="a t" style="left:1534px;top:350.0px;height:16px;line-height:16px;font-size:12px;color:#e4e7ea;white-space:nowrap;">12</div><div class="a" style="left:1463px;top:370px;width:180px;height:1px;background:#4f5966;"></div>
<div class="a t" style="left:1468px;top:377.0px;height:16px;line-height:16px;font-size:12px;color:#e4e7ea;white-space:nowrap;">终点墙高</div><div class="a t" style="left:1534px;top:375.0px;height:16px;line-height:16px;font-size:12px;color:#e4e7ea;white-space:nowrap;">9.8128</div><div class="a" style="left:1463px;top:395px;width:180px;height:1px;background:#4f5966;"></div>
<div class="a t" style="left:1468px;top:402.0px;height:16px;line-height:16px;font-size:12px;color:#e4e7ea;white-space:nowrap;">墙底坡度(...</div><div class="a t" style="left:1534px;top:400.0px;height:16px;line-height:16px;font-size:12px;color:#e4e7ea;white-space:nowrap;">11.6901</div><div class="a" style="left:1463px;top:420px;width:180px;height:1px;background:#4f5966;"></div>
<div class="a t" style="left:1468px;top:427.0px;height:16px;line-height:16px;font-size:12px;color:#e4e7ea;white-space:nowrap;">起点墙顶...</div><div class="a t" style="left:1534px;top:425.0px;height:16px;line-height:16px;font-size:12px;color:#e4e7ea;white-space:nowrap;">3.0648</div><div class="a" style="left:1463px;top:445px;width:180px;height:1px;background:#4f5966;"></div>
<div class="a t" style="left:1468px;top:452.0px;height:16px;line-height:16px;font-size:12px;color:#e4e7ea;white-space:nowrap;">终点墙顶...</div><div class="a t" style="left:1534px;top:450.0px;height:16px;line-height:16px;font-size:12px;color:#e4e7ea;white-space:nowrap;">4</div><div class="a" style="left:1463px;top:470px;width:180px;height:1px;background:#4f5966;"></div>
<div class="a t" style="left:1468px;top:477.0px;height:16px;line-height:16px;font-size:12px;color:#e4e7ea;white-space:nowrap;">起点墙顶...</div><div class="a t" style="left:1534px;top:475.0px;height:16px;line-height:16px;font-size:12px;color:#e4e7ea;white-space:nowrap;">502.6739</div><div class="a" style="left:1463px;top:495px;width:180px;height:1px;background:#4f5966;"></div>
<div class="a t" style="left:1468px;top:502.0px;height:16px;line-height:16px;font-size:12px;color:#e4e7ea;white-space:nowrap;">终点墙顶...</div><div class="a t" style="left:1534px;top:500.0px;height:16px;line-height:16px;font-size:12px;color:#e4e7ea;white-space:nowrap;">503.8453</div><div class="a" style="left:1463px;top:520px;width:180px;height:1px;background:#4f5966;"></div>
<div class="a t" style="left:1468px;top:527.0px;height:16px;line-height:16px;font-size:12px;color:#e4e7ea;white-space:nowrap;">埋深</div><div class="a t" style="left:1534px;top:525.0px;height:16px;line-height:16px;font-size:12px;color:#e4e7ea;white-space:nowrap;">1</div><div class="a" style="left:1463px;top:545px;width:180px;height:1px;background:#4f5966;"></div>
<div class="a t" style="left:1468px;top:552.0px;height:16px;line-height:16px;font-size:12px;color:#e4e7ea;white-space:nowrap;">基础高度</div><div class="a t" style="left:1534px;top:550.0px;height:16px;line-height:16px;font-size:12px;color:#e4e7ea;white-space:nowrap;">0</div><div class="a" style="left:1463px;top:570px;width:180px;height:1px;background:#4f5966;"></div>
<div class="a" style="left:1530px;top:295px;width:1px;height:277px;background:#4f5966;"></div>
<div class="a t" style="left:1468px;top:601.5px;height:16px;line-height:16px;font-size:12px;color:#e4e7ea;">类型</div><svg class="a" style="left:1627px;top:608px;" width="10" height="6" viewBox="0 0 10 6"><path d="M0 0h10l-5 6z" fill="#e8ecf0"/></svg><div class="a" style="left:1463px;top:619px;width:180px;height:1px;background:#c8d0d8;"></div>
<div class="a t" style="left:1468px;top:627.0px;height:16px;line-height:16px;font-size:12px;color:#e4e7ea;white-space:nowrap;">类型</div><div class="a t" style="left:1534px;top:625.0px;height:16px;line-height:16px;font-size:12px;color:#e4e7ea;white-space:nowrap;">路堤墙</div><div class="a" style="left:1463px;top:645px;width:180px;height:1px;background:#4f5966;"></div>
<div class="a t" style="left:1468px;top:652.0px;height:16px;line-height:16px;font-size:12px;color:#e4e7ea;white-space:nowrap;">类型名称</div><div class="a t" style="left:1534px;top:650.0px;height:16px;line-height:16px;font-size:12px;color:#e4e7ea;white-space:nowrap;">仰斜式路堤墙</div><div class="a" style="left:1463px;top:670px;width:180px;height:1px;background:#4f5966;"></div>
<div class="a t" style="left:1468px;top:677.0px;height:16px;line-height:16px;font-size:12px;color:#e4e7ea;white-space:nowrap;">半幅宽度</div><div class="a t" style="left:1534px;top:675.0px;height:16px;line-height:16px;font-size:12px;color:#e4e7ea;white-space:nowrap;">4.25</div><div class="a" style="left:1463px;top:695px;width:180px;height:1px;background:#4f5966;"></div>
<div class="a t" style="left:1468px;top:702.0px;height:16px;line-height:16px;font-size:12px;color:#e4e7ea;white-space:nowrap;">设计荷载</div><div class="a t" style="left:1534px;top:700.0px;height:16px;line-height:16px;font-size:12px;color:#e4e7ea;white-space:nowrap;">汽车-20/15级：挂...</div><div class="a" style="left:1463px;top:720px;width:180px;height:1px;background:#4f5966;"></div>
<div class="a t" style="left:1468px;top:727.0px;height:16px;line-height:16px;font-size:12px;color:#e4e7ea;white-space:nowrap;">内摩擦角</div><div class="a t" style="left:1534px;top:725.0px;height:16px;line-height:16px;font-size:12px;color:#e4e7ea;white-space:nowrap;">35</div><div class="a" style="left:1463px;top:745px;width:180px;height:1px;background:#4f5966;"></div>
<div class="a t" style="left:1468px;top:752.0px;height:16px;line-height:16px;font-size:12px;color:#e4e7ea;white-space:nowrap;">地基承载力</div><div class="a t" style="left:1534px;top:750.0px;height:16px;line-height:16px;font-size:12px;color:#e4e7ea;white-space:nowrap;">250</div><div class="a" style="left:1463px;top:770px;width:180px;height:1px;background:#4f5966;"></div>
<div class="a t" style="left:1468px;top:777.0px;height:16px;line-height:16px;font-size:12px;color:#e4e7ea;white-space:nowrap;">上路堤填...</div><div class="a t" style="left:1534px;top:775.0px;height:16px;line-height:16px;font-size:12px;color:#e4e7ea;white-space:nowrap;">3</div><div class="a" style="left:1463px;top:795px;width:180px;height:1px;background:#4f5966;"></div>
<div class="a t" style="left:1468px;top:802.0px;height:16px;line-height:16px;font-size:12px;color:#e4e7ea;white-space:nowrap;">上路堤坡度</div><div class="a t" style="left:1534px;top:800.0px;height:16px;line-height:16px;font-size:12px;color:#e4e7ea;white-space:nowrap;">1.5</div><div class="a" style="left:1463px;top:820px;width:180px;height:1px;background:#4f5966;"></div>
<div class="a" style="left:1530px;top:620px;width:1px;height:202px;background:#4f5966;"></div>
<div class="a" style="left:1468px;top:854px;width:96px;height:1px;background-image:linear-gradient(90deg,#d0d4d8 40%,transparent 40%);background-size:4px 1px;"></div>
<div class="a" style="left:1455px;top:983px;width:218px;height:2px;background:#2f3640;"></div>
<div class="a" style="left:1669px;top:900px;width:9px;height:9px;background:#e89040;border-radius:5px;"></div>
<div class="a" style="left:111px;top:115px;width:136px;height:160px;background:#2f3640;box-shadow:2px 2px 3px rgba(0,0,0,.55);"></div>
<div class="a" style="left:111px;top:115px;width:23px;height:160px;background:#3b4451;"></div>
<div class="a t" style="left:111px;top:271px;width:90px;height:23px;line-height:22px;font-size:16.5px;font-weight:bold;color:#fff;transform-origin:0 0;transform:rotate(-90deg);white-space:nowrap;letter-spacing:1.2px;">挡墙库管理</div>
<div class="a" style="left:137px;top:116px;width:105px;height:19px;background:#4d5666;"></div>
<div class="a t" style="left:167px;top:117.5px;height:16px;line-height:16px;font-size:12px;color:#fff;white-space:nowrap;">新建挡墙类型</div>
<div class="a t" style="left:163px;top:136.5px;height:16px;line-height:16px;font-size:12px;color:#c4c9d0;white-space:nowrap;">编辑挡墙类型</div>
<div class="a" style="left:141px;top:158px;width:99px;height:1px;background:#566170;"></div>
<div class="a t" style="left:163px;top:164.5px;height:16px;line-height:16px;font-size:12px;color:#c4c9d0;white-space:nowrap;">添加标准挡墙</div>
<div class="a t" style="left:163px;top:184.5px;height:16px;line-height:16px;font-size:12px;color:#c4c9d0;white-space:nowrap;">编辑标准挡墙</div>
<div class="a t" style="left:163px;top:204.5px;height:16px;line-height:16px;font-size:12px;color:#c4c9d0;white-space:nowrap;">提取标准挡墙</div>
<div class="a t" style="left:163px;top:224.5px;height:16px;line-height:16px;font-size:12px;color:#c4c9d0;white-space:nowrap;">保存到图库</div>
<div class="a" style="left:141px;top:246px;width:99px;height:1px;background:#566170;"></div>
<div class="a t" style="left:163px;top:252.5px;height:16px;line-height:16px;font-size:12px;color:#c4c9d0;white-space:nowrap;">查看标准库</div>
</body></html>
